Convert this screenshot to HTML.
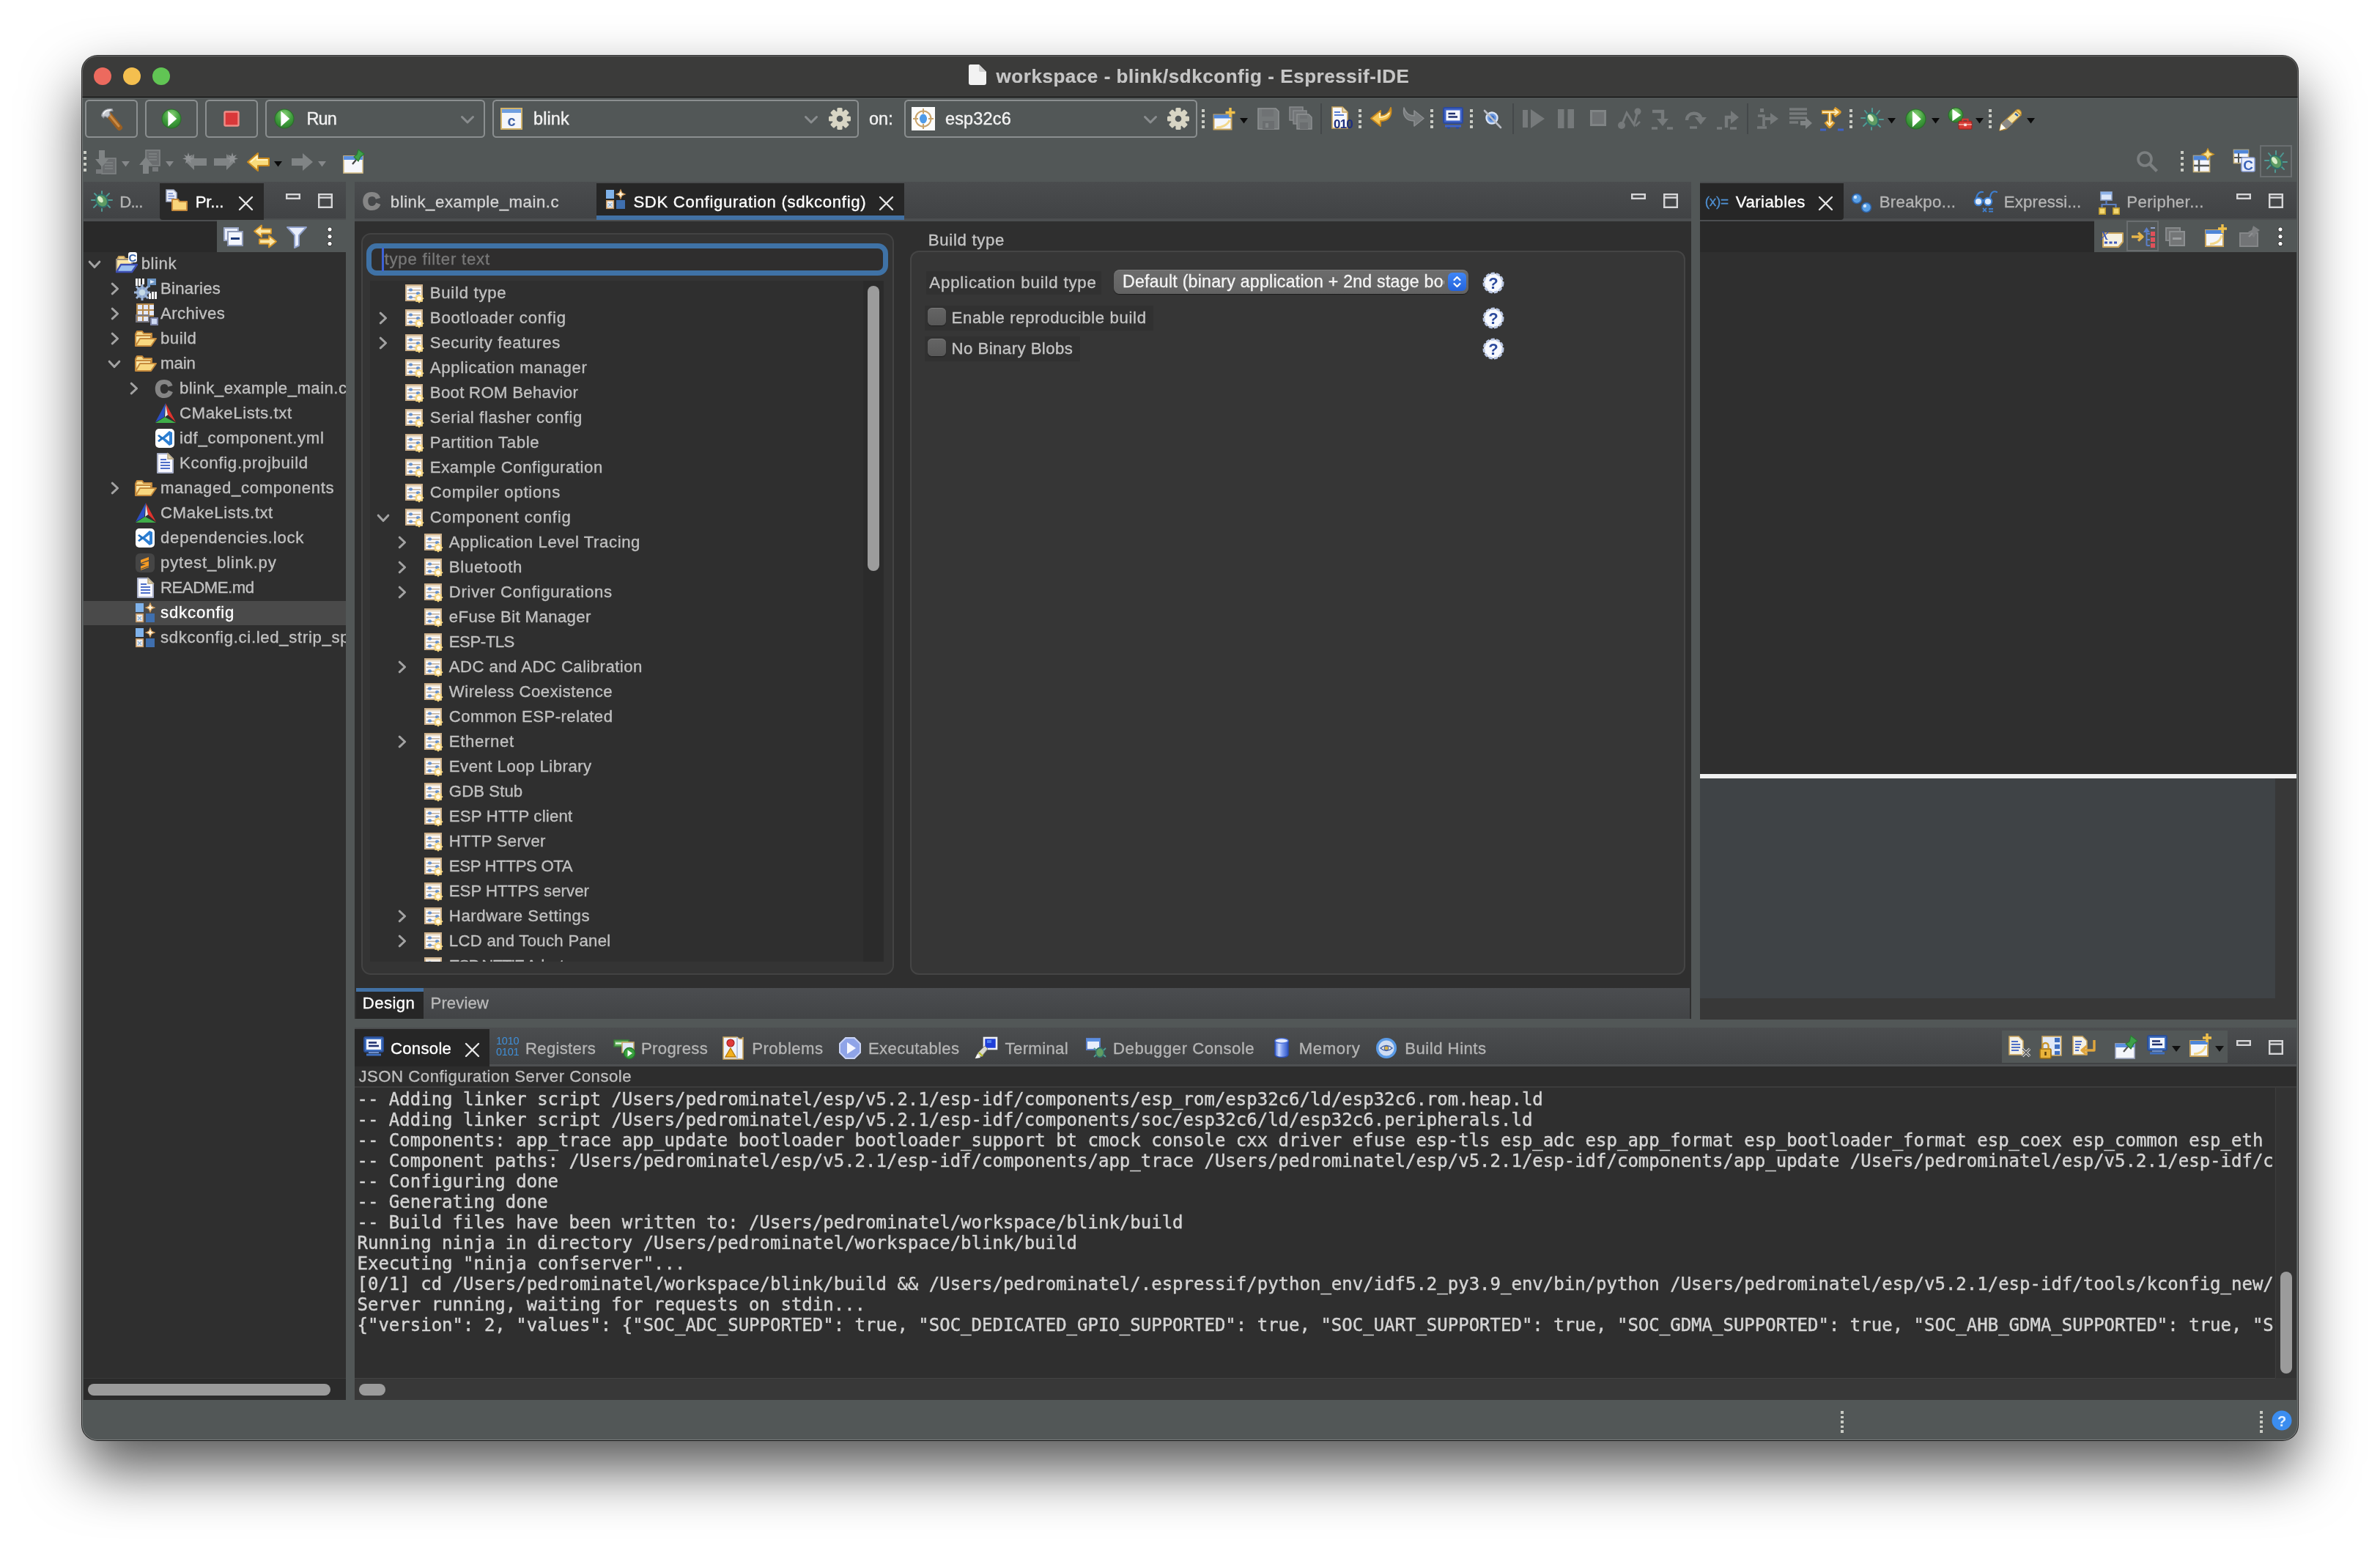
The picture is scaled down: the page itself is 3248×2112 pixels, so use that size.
<!DOCTYPE html>
<html lang="en"><head><meta charset="utf-8"><title>workspace - blink/sdkconfig - Espressif-IDE</title>
<style>
*{box-sizing:border-box;margin:0;padding:0}
html,body{width:3248px;height:2112px;background:#fff;overflow:hidden}
body{position:relative;font-family:"Liberation Sans",sans-serif;font-size:23px;color:#c9c9c9;-webkit-font-smoothing:antialiased}
#win{position:absolute;left:112px;top:76px;width:3024px;height:1889px;border-radius:21px;background:#525757;overflow:hidden;
 box-shadow:0 0 0 1px rgba(0,0,0,.8),0 40px 80px rgba(0,0,0,.66)}
#win:after{content:'';position:absolute;left:0;top:0;right:0;bottom:0;border-radius:21px;box-shadow:inset 0 0 0 1px rgba(255,255,255,.24);pointer-events:none}
#pg{position:absolute;left:-112px;top:-76px;width:3248px;height:2112px;will-change:transform}
.a{position:absolute}
.t{position:absolute;white-space:nowrap;line-height:34px;height:34px}
.mono{font-family:"DejaVu Sans Mono","Liberation Mono",monospace;font-size:24px;line-height:28px;white-space:pre;color:#d4d4d4;-webkit-text-stroke:.45px}
svg{position:absolute;overflow:visible}
.btn{position:absolute;border:2px solid #8b8f90;border-radius:5.5px;background:#525757}
</style></head>
<body>
<div id="win"><div id="pg">
<div class="a" style="left:112px;top:75px;width:3024px;height:57px;background:#3b3b3a;"></div>
<div class="a" style="left:112px;top:131.6px;width:3024px;height:1.4000000000000057px;background:#050505;"></div>
<div class="a" style="left:128px;top:92px;width:24px;height:24px;border-radius:50%;background:#ec6a5e"></div>
<div class="a" style="left:168px;top:92px;width:24px;height:24px;border-radius:50%;background:#f4bf4f"></div>
<div class="a" style="left:208px;top:92px;width:24px;height:24px;border-radius:50%;background:#61c554"></div>
<svg style="left:1322px;top:88px" width="24" height="28" viewBox="0 0 24 28"><path d="M2 0 H14 L24 10 V25 a3 3 0 0 1 -3 3 H3 a3 3 0 0 1 -3 -3 V2 a2 2 0 0 1 2 -2Z" fill="#f2f2f2"/><path d="M14 0 L24 10 H16 a2 2 0 0 1 -2 -2Z" fill="#cfcfcf"/></svg>
<div class="t" style="left:1359.56px;top:87.1px;color:#c6c6c6;font-size:26px;font-weight:bold;letter-spacing:0.547px;-webkit-text-stroke:0.2px;">workspace - blink/sdkconfig - Espressif-IDE</div>
<div class="a" style="left:112px;top:133px;width:3024px;height:116px;background:#525757;"></div>
<div class="a" style="left:114px;top:248px;width:358px;height:1662px;background:#2f2f2f;"></div>
<div class="a" style="left:484px;top:248px;width:1824px;height:1142px;background:#2f2f2f;"></div>
<div class="a" style="left:2320px;top:248px;width:814px;height:1143px;background:#2f2f2f;"></div>
<div class="a" style="left:484px;top:1404px;width:2650px;height:506px;background:#2f2f2f;"></div>
<div class="a" style="left:114px;top:248px;width:358px;height:50px;background:linear-gradient(#4a4c4e,#414345);"></div>
<div class="a" style="left:114px;top:298px;width:358px;height:4px;background:#4c4e50;"></div>
<div class="a" style="left:218px;top:250px;width:142px;height:50px;background:#292929;border-radius:0 0 0 4px;"></div>
<div class="a" style="left:114px;top:302px;width:358px;height:42px;background:#292929;"></div>
<div class="a" style="left:296px;top:300px;width:176px;height:44px;background:#525757;"></div>
<svg style="left:124px;top:258px" width="30" height="30" viewBox="0 0 30 30"><g stroke="#4f9a94" stroke-width="2" stroke-linecap="round"><path d="M15 3V8M5 6L9 10M25 6L21 10M1 15H7M29 15H23M4 25L9 20M26 25L21 20M15 27V30"/></g><ellipse cx="15" cy="16" rx="7.5" ry="9" transform="rotate(-35 15 16)" fill="#5f9c63" stroke="#2f6f6a" stroke-width="2"/><ellipse cx="13" cy="14" rx="3" ry="5" transform="rotate(-35 13 14)" fill="#d9ecc9"/></svg>
<div class="t" style="left:163.2px;top:259.4px;color:#b4b4b4;font-size:22.2px;letter-spacing:-0.777px;-webkit-text-stroke:0.35px;">D...</div>
<svg style="left:226px;top:258px" width="30" height="30" viewBox="0 0 30 30"><path d="M1 1H11L15 5V17H1Z" fill="#e9edf8" stroke="#9da7bf" stroke-width="1.6"/><g stroke="#6f86c9" stroke-width="1.6"><path d="M3.5 6H10M3.5 9.5H12M3.5 13H12"/></g><path d="M9 14H17L19 17H29V29H9Z" fill="#f8d57a" stroke="#c58a3c" stroke-width="2" stroke-linejoin="round"/></svg>
<div class="t" style="left:266.7px;top:259.4px;color:#ffffff;font-size:22.2px;letter-spacing:-0.154px;-webkit-text-stroke:0.35px;">Pr...</div>
<svg style="left:326px;top:268px" width="19" height="19" viewBox="0 0 19 19"><path d="M1 1L18 18M18 1L1 18" stroke="#e8e8e8" stroke-width="2.4" stroke-linecap="round"/></svg>
<svg style="left:390px;top:264px" width="20" height="8" viewBox="0 0 20 8"><rect x="1.2" y="1.2" width="17.6" height="5.6" fill="none" stroke="#d6d6d8" stroke-width="2.4"/></svg>
<svg style="left:434px;top:264px" width="20" height="20" viewBox="0 0 20 20"><rect x="1.2" y="1.2" width="17.6" height="17.6" fill="none" stroke="#d6d6d8" stroke-width="2.4"/><path d="M1 5.6H19" stroke="#d6d6d8" stroke-width="2.4"/></svg>
<svg style="left:305px;top:310px" width="28" height="26" viewBox="0 0 28 26"><rect x="1" y="1" width="19" height="17" fill="#e9eefb" stroke="#9aa6c4" stroke-width="2"/><rect x="6" y="6" width="20" height="19" fill="#f4f7ff" stroke="#8f9bb8" stroke-width="2"/><path d="M10 15.5H22" stroke="#1e3a78" stroke-width="3"/></svg>
<svg style="left:345px;top:306px" width="34" height="34" viewBox="0 0 34 34"><g stroke="#d99a2b" stroke-width="1.8" stroke-linejoin="round" fill="#fbe7a8"><path d="M2 9.5L12 1.5V6.5H25V12.5H12V17.5Z"/><path d="M32 23.5L22 15.5V20.5H9V26.5H22V31.5Z"/></g></svg>
<svg style="left:391px;top:309px" width="28" height="30" viewBox="0 0 28 30"><path d="M1 1H27L17 12V26L11 29V12Z" fill="#e8eefc" stroke="#8fa0c8" stroke-width="2" stroke-linejoin="round"/></svg>
<svg style="left:445px;top:309px" width="10" height="30" viewBox="0 0 10 30"><circle cx="5" cy="4" r="3.2" fill="#fff" stroke="#262626" stroke-width="1"/><circle cx="5" cy="13.8" r="3.2" fill="#fff" stroke="#262626" stroke-width="1"/><circle cx="5" cy="23.6" r="3.2" fill="#fff" stroke="#262626" stroke-width="1"/></svg>
<div class="a" style="left:114px;top:344px;width:358px;height:1536px;overflow:hidden"><div class="a" style="left:-114px;top:-344px;width:3248px;height:2112px">
<svg style="left:121px;top:356.3px" width="16" height="10" viewBox="0 0 16 10"><path d="M1.2 1.2 L8 8.6 L14.8 1.2" fill="none" stroke="#a3a3a3" stroke-width="3" stroke-linecap="round" stroke-linejoin="round"/></svg>
<svg style="left:156px;top:344.3px" width="32" height="30" viewBox="0 0 32 30"><path d="M4 10 L6 6 L13 6 L15 9 L24 9 L24 14 L4 14Z" fill="#f6d98b" stroke="#caa45e" stroke-width="2" stroke-linejoin="round"/><path d="M3 26 L3 10 L24 10 L24 16" fill="#fbe7a6" stroke="#9a8d7a" stroke-width="2"/><path d="M3 27 L9 17 L31 17 L24 27Z" fill="#9cc0ef" stroke="#3d4fb3" stroke-width="2.4" stroke-linejoin="round"/><rect x="19" y="0" width="12" height="14" rx="3" fill="#fff"/><text x="25" y="12.5" font-family="Liberation Sans, sans-serif" font-weight="bold" font-size="15" fill="#3863a8" text-anchor="middle">C</text></svg>
<div class="t" style="left:192.65px;top:343.4px;color:#c0c0c0;font-size:22.2px;letter-spacing:0.586px;-webkit-text-stroke:0.35px;">blink</div>
<svg style="left:152px;top:386.3px" width="10" height="16" viewBox="0 0 10 16"><path d="M1.2 1.2 L8.6 8 L1.2 14.8" fill="none" stroke="#a3a3a3" stroke-width="3" stroke-linecap="round" stroke-linejoin="round"/></svg>
<svg style="left:183px;top:378.3px" width="32" height="32" viewBox="0 0 32 32"><g fill="#f4f4f4"><rect x="2" y="2" width="3" height="10"/><rect x="6" y="2" width="3" height="10"/><rect x="11" y="2" width="3" height="8"/><rect x="24" y="20" width="3" height="10"/><rect x="28" y="20" width="3" height="10"/><rect x="20" y="22" width="3" height="8"/></g><path d="M18 2 L30 2 L30 11 L22 11 L22 14 L18 14Z" fill="#6b93c1"/><path d="M22 4 L28 6.5 L22 9Z" fill="#dfeaf7"/><circle cx="11" cy="21" r="8" fill="#7f9cc6"/><circle cx="11" cy="21" r="4.2" fill="#cfe0ea"/><g stroke="#9db4d6" stroke-width="3"><path d="M11 10V32M0 21H22M3 13L19 29M19 13L3 29"/></g><circle cx="11" cy="21" r="4" fill="#c6dbe6"/></svg>
<div class="t" style="left:219.0px;top:377.4px;color:#c0c0c0;font-size:22.2px;letter-spacing:0.251px;-webkit-text-stroke:0.35px;">Binaries</div>
<svg style="left:152px;top:420.3px" width="10" height="16" viewBox="0 0 10 16"><path d="M1.2 1.2 L8.6 8 L1.2 14.8" fill="none" stroke="#a3a3a3" stroke-width="3" stroke-linecap="round" stroke-linejoin="round"/></svg>
<svg style="left:185px;top:413.3px" width="32" height="32" viewBox="0 0 32 32"><rect x="1" y="1" width="24" height="24" fill="#b5894b"/><rect x="3" y="3" width="6" height="6" fill="#e3e8f8"/><rect x="11" y="3" width="6" height="6" fill="#e3e8f8"/><rect x="19" y="3" width="6" height="6" fill="#e3e8f8"/><rect x="3" y="11" width="6" height="6" fill="#e3e8f8"/><rect x="11" y="11" width="6" height="6" fill="#e3e8f8"/><rect x="19" y="11" width="6" height="6" fill="#e3e8f8"/><rect x="3" y="19" width="6" height="6" fill="#e3e8f8"/><rect x="11" y="19" width="6" height="6" fill="#e3e8f8"/><rect x="1" y="17" width="17" height="9" fill="none" stroke="#7a7a85" stroke-width="2"/><rect x="19" y="19" width="8" height="8" fill="#2f2f2f"/><rect x="21" y="21" width="9" height="9" fill="#cdd9f3" stroke="#7f86a8" stroke-width="2"/></svg>
<div class="t" style="left:219.0px;top:411.4px;color:#c0c0c0;font-size:22.2px;letter-spacing:0.411px;-webkit-text-stroke:0.35px;">Archives</div>
<svg style="left:152px;top:454.3px" width="10" height="16" viewBox="0 0 10 16"><path d="M1.2 1.2 L8.6 8 L1.2 14.8" fill="none" stroke="#a3a3a3" stroke-width="3" stroke-linecap="round" stroke-linejoin="round"/></svg>
<svg style="left:183px;top:450.3px" width="32" height="24" viewBox="0 0 32 24"><path d="M2 6 L4 2 L11 2 L13 5 L24 5 L24 10 L2 10Z" fill="#f6d98b" stroke="#c58a3c" stroke-width="2" stroke-linejoin="round"/><path d="M2 22 L2 8 L23 8 L23 12" fill="#fbe7a6" stroke="#c58a3c" stroke-width="2" stroke-linejoin="round"/><path d="M2 22 L8 12 L30 12 L23 22Z" fill="#f8d880" stroke="#c58a3c" stroke-width="2" stroke-linejoin="round"/></svg>
<div class="t" style="left:219.0px;top:445.4px;color:#c0c0c0;font-size:22.2px;letter-spacing:0.514px;-webkit-text-stroke:0.35px;">build</div>
<svg style="left:148px;top:492.3px" width="16" height="10" viewBox="0 0 16 10"><path d="M1.2 1.2 L8 8.6 L14.8 1.2" fill="none" stroke="#a3a3a3" stroke-width="3" stroke-linecap="round" stroke-linejoin="round"/></svg>
<svg style="left:183px;top:484.3px" width="32" height="24" viewBox="0 0 32 24"><path d="M2 6 L4 2 L11 2 L13 5 L24 5 L24 10 L2 10Z" fill="#f6d98b" stroke="#c58a3c" stroke-width="2" stroke-linejoin="round"/><path d="M2 22 L2 8 L23 8 L23 12" fill="#fbe7a6" stroke="#c58a3c" stroke-width="2" stroke-linejoin="round"/><path d="M2 22 L8 12 L30 12 L23 22Z" fill="#f8d880" stroke="#c58a3c" stroke-width="2" stroke-linejoin="round"/></svg>
<div class="t" style="left:219.0px;top:479.4px;color:#c0c0c0;font-size:22.2px;letter-spacing:-0.058px;-webkit-text-stroke:0.35px;">main</div>
<svg style="left:178px;top:522.3px" width="10" height="16" viewBox="0 0 10 16"><path d="M1.2 1.2 L8.6 8 L1.2 14.8" fill="none" stroke="#a3a3a3" stroke-width="3" stroke-linecap="round" stroke-linejoin="round"/></svg>
<div class="t" style="left:211.5px;top:513.8px;font-weight:bold;font-size:33px;color:#858585;letter-spacing:0;-webkit-text-stroke:2.2px #858585">C</div>
<div class="t" style="left:245.0px;top:513.4px;color:#c0c0c0;font-size:22.2px;letter-spacing:0.447px;-webkit-text-stroke:0.35px;">blink_example_main.c</div>
<svg style="left:212px;top:550.3px" width="28" height="28" viewBox="0 0 28 28"><path d="M14 0 L0 26 L12 19Z" fill="#2a4fc4"/><path d="M14 0 L28 26 L17 16Z" fill="#e0322c"/><path d="M0 27 L13 19 L28 27Z" fill="#3fae49"/><path d="M14 2 L13 19 L17 16Z" fill="#e8e8e8"/></svg>
<div class="t" style="left:245.0px;top:547.4px;color:#c0c0c0;font-size:22.2px;letter-spacing:0.59px;-webkit-text-stroke:0.35px;">CMakeLists.txt</div>
<svg style="left:212px;top:585.3px" width="26" height="26" viewBox="0 0 26 26"><rect x="0" y="0" width="26" height="26" rx="5" fill="#fff"/><path d="M19 3 L23 5 L23 21 L19 23 L8 13Z" fill="#2d7fd3"/><path d="M19 8.5 L19 17.5 L13 13Z" fill="#fff"/><path d="M3 9.5 L5 8 L12 13 L5 18 L3 16.5 L7 13Z" fill="#1f6fc0"/></svg>
<div class="t" style="left:245.0px;top:581.4px;color:#c0c0c0;font-size:22.2px;letter-spacing:0.665px;-webkit-text-stroke:0.35px;">idf_component.yml</div>
<svg style="left:214px;top:618.3px" width="24" height="28" viewBox="0 0 24 28"><path d="M1 1 L15 1 L22 8 L22 27 L1 27Z" fill="#f8f8ff" stroke="#a9b0c9" stroke-width="2" stroke-linejoin="round"/><path d="M15 1 L15 8 L22 8Z" fill="#e3d2a8" stroke="#b7a783" stroke-width="1.5"/><g stroke="#4f6fc7" stroke-width="2"><path d="M5 9H13M5 13H18M5 17H18M5 21H18"/></g></svg>
<div class="t" style="left:245.0px;top:615.4px;color:#c0c0c0;font-size:22.2px;letter-spacing:0.696px;-webkit-text-stroke:0.35px;">Kconfig.projbuild</div>
<svg style="left:152px;top:658.3px" width="10" height="16" viewBox="0 0 10 16"><path d="M1.2 1.2 L8.6 8 L1.2 14.8" fill="none" stroke="#a3a3a3" stroke-width="3" stroke-linecap="round" stroke-linejoin="round"/></svg>
<svg style="left:183px;top:654.3px" width="32" height="24" viewBox="0 0 32 24"><path d="M2 6 L4 2 L11 2 L13 5 L24 5 L24 10 L2 10Z" fill="#f6d98b" stroke="#c58a3c" stroke-width="2" stroke-linejoin="round"/><path d="M2 22 L2 8 L23 8 L23 12" fill="#fbe7a6" stroke="#c58a3c" stroke-width="2" stroke-linejoin="round"/><path d="M2 22 L8 12 L30 12 L23 22Z" fill="#f8d880" stroke="#c58a3c" stroke-width="2" stroke-linejoin="round"/></svg>
<div class="t" style="left:219.0px;top:649.4px;color:#c0c0c0;font-size:22.2px;letter-spacing:0.637px;-webkit-text-stroke:0.35px;">managed_components</div>
<svg style="left:185px;top:686.3px" width="28" height="28" viewBox="0 0 28 28"><path d="M14 0 L0 26 L12 19Z" fill="#2a4fc4"/><path d="M14 0 L28 26 L17 16Z" fill="#e0322c"/><path d="M0 27 L13 19 L28 27Z" fill="#3fae49"/><path d="M14 2 L13 19 L17 16Z" fill="#e8e8e8"/></svg>
<div class="t" style="left:219.0px;top:683.4px;color:#c0c0c0;font-size:22.2px;letter-spacing:0.598px;-webkit-text-stroke:0.35px;">CMakeLists.txt</div>
<svg style="left:185px;top:721.3px" width="26" height="26" viewBox="0 0 26 26"><rect x="0" y="0" width="26" height="26" rx="5" fill="#fff"/><path d="M19 3 L23 5 L23 21 L19 23 L8 13Z" fill="#2d7fd3"/><path d="M19 8.5 L19 17.5 L13 13Z" fill="#fff"/><path d="M3 9.5 L5 8 L12 13 L5 18 L3 16.5 L7 13Z" fill="#1f6fc0"/></svg>
<div class="t" style="left:219.0px;top:717.4px;color:#c0c0c0;font-size:22.2px;letter-spacing:0.723px;-webkit-text-stroke:0.35px;">dependencies.lock</div>
<svg style="left:185px;top:755.3px" width="26" height="26" viewBox="0 0 26 26"><rect x="0" y="0" width="26" height="26" rx="6" fill="#454545"/><path d="M18 5 L7 9 L7 13 L18 9Z M7 14 L18 10.5 L18 17 L7 21 L7 17.5 L14 15Z M18 18 L7 22 L7 23 L18 19Z" fill="#f59a23"/></svg>
<div class="t" style="left:219.0px;top:751.4px;color:#c0c0c0;font-size:22.2px;letter-spacing:0.79px;-webkit-text-stroke:0.35px;">pytest_blink.py</div>
<svg style="left:187px;top:788.3px" width="24" height="28" viewBox="0 0 24 28"><path d="M1 1 L15 1 L22 8 L22 27 L1 27Z" fill="#f8f8ff" stroke="#a9b0c9" stroke-width="2" stroke-linejoin="round"/><path d="M15 1 L15 8 L22 8Z" fill="#e3d2a8" stroke="#b7a783" stroke-width="1.5"/><g stroke="#4f6fc7" stroke-width="2"><path d="M5 9H13M5 13H18M5 17H18M5 21H18"/></g></svg>
<div class="t" style="left:219.0px;top:785.4px;color:#c0c0c0;font-size:22.2px;letter-spacing:-0.474px;-webkit-text-stroke:0.35px;">README.md</div>
<div class="a" style="left:114px;top:819.5px;width:358px;height:33.0px;background:#4a4a4a;"></div>
<svg style="left:185px;top:823.3px" width="26" height="26" viewBox="0 0 26 26"><rect x="0" y="0" width="11" height="12" fill="#7fb2ea"/><rect x="0.8" y="14.8" width="9.5" height="10.5" fill="#f1f1f1" stroke="#c89b67" stroke-width="1.6"/><path d="M3 18L8 23M8 18L3 23" stroke="#8fb4dc" stroke-width="1.4"/><rect x="14" y="14" width="12" height="12" fill="#3f6fae"/><path d="M20 0 L21.8 4.2 L26 6 L21.8 7.8 L20 12 L18.2 7.8 L14 6 L18.2 4.2Z" fill="#fff5dd" stroke="#d39a55" stroke-width="1.2"/></svg>
<div class="t" style="left:219.0px;top:819.4px;color:#ffffff;font-size:22.2px;letter-spacing:0.84px;-webkit-text-stroke:0.35px;">sdkconfig</div>
<svg style="left:185px;top:857.3px" width="26" height="26" viewBox="0 0 26 26"><rect x="0" y="0" width="11" height="12" fill="#7fb2ea"/><rect x="0.8" y="14.8" width="9.5" height="10.5" fill="#f1f1f1" stroke="#c89b67" stroke-width="1.6"/><path d="M3 18L8 23M8 18L3 23" stroke="#8fb4dc" stroke-width="1.4"/><rect x="14" y="14" width="12" height="12" fill="#3f6fae"/><path d="M20 0 L21.8 4.2 L26 6 L21.8 7.8 L20 12 L18.2 7.8 L14 6 L18.2 4.2Z" fill="#fff5dd" stroke="#d39a55" stroke-width="1.2"/></svg>
<div class="t" style="left:219.0px;top:853.4px;color:#c0c0c0;font-size:22.2px;letter-spacing:0.663px;-webkit-text-stroke:0.35px;">sdkconfig.ci.led_strip_spi</div>
</div></div>
<div class="a" style="left:114px;top:1880px;width:358px;height:30px;background:#2b2b2b;"></div>
<div class="a" style="left:114px;top:1880px;width:358px;height:1px;background:#3a3a3a;"></div>
<div class="a" style="left:120px;top:1888px;width:331px;height:16px;border-radius:8px;background:#9b9b9b"></div>
<div class="a" style="left:484px;top:248px;width:1824px;height:50px;background:linear-gradient(#4a4c4e,#414345);"></div>
<div class="a" style="left:484px;top:298px;width:1824px;height:4px;background:#4c4e50;"></div>
<div class="t" style="left:495px;top:257.5px;font-weight:bold;font-size:33px;color:#868686;letter-spacing:0;-webkit-text-stroke:2.2px #868686">C</div>
<div class="t" style="left:532.8px;top:259.4px;color:#d4d4d4;font-size:22.2px;letter-spacing:0.539px;-webkit-text-stroke:0.35px;">blink_example_main.c</div>
<div class="a" style="left:814px;top:250px;width:420px;height:50px;background:#262626;"></div>
<div class="a" style="left:814px;top:294px;width:420px;height:6px;background:#4271a4;"></div>
<svg style="left:827px;top:259px" width="26" height="26" viewBox="0 0 26 26"><rect x="0" y="0" width="11" height="12" fill="#7fb2ea"/><rect x="0.8" y="14.8" width="9.5" height="10.5" fill="#f1f1f1" stroke="#c89b67" stroke-width="1.6"/><path d="M3 18L8 23M8 18L3 23" stroke="#8fb4dc" stroke-width="1.4"/><rect x="14" y="14" width="12" height="12" fill="#3f6fae"/><path d="M20 0 L21.8 4.2 L26 6 L21.8 7.8 L20 12 L18.2 7.8 L14 6 L18.2 4.2Z" fill="#fff5dd" stroke="#d39a55" stroke-width="1.2"/></svg>
<div class="t" style="left:864.4px;top:259.4px;color:#ffffff;font-size:22.2px;letter-spacing:0.672px;-webkit-text-stroke:0.35px;">SDK Configuration (sdkconfig)</div>
<svg style="left:1200px;top:268px" width="19" height="19" viewBox="0 0 19 19"><path d="M1 1L18 18M18 1L1 18" stroke="#e8e8e8" stroke-width="2.4" stroke-linecap="round"/></svg>
<svg style="left:2226px;top:264px" width="20" height="8" viewBox="0 0 20 8"><rect x="1.2" y="1.2" width="17.6" height="5.6" fill="none" stroke="#d6d6d8" stroke-width="2.4"/></svg>
<svg style="left:2270px;top:264px" width="20" height="20" viewBox="0 0 20 20"><rect x="1.2" y="1.2" width="17.6" height="17.6" fill="none" stroke="#d6d6d8" stroke-width="2.4"/><path d="M1 5.6H19" stroke="#d6d6d8" stroke-width="2.4"/></svg>
<div class="a" style="left:486px;top:302px;width:1820px;height:1046px;background:#2f2f2f;"></div>
<div class="a" style="left:493px;top:318px;width:727px;height:1012px;border:2px solid #434343;border-radius:13px;background:#343434"></div>
<div class="a" style="left:500px;top:332px;width:712px;height:44px;border:7px solid #3f72a6;border-radius:14px;background:#2f2e2e"></div>
<div class="a" style="left:521px;top:338px;width:3px;height:32px;background:#3d62d8;"></div>
<div class="t" style="left:524.5px;top:337.4px;color:#777777;font-size:22.2px;letter-spacing:0.781px;-webkit-text-stroke:0.35px;">type filter text</div>
<div class="a" style="left:505px;top:383px;width:701px;height:929px;background:#2f2f2f;"></div>
<div class="a" style="left:1178px;top:383px;width:28px;height:929px;background:#2b2b2b;"></div>
<div class="a" style="left:1184px;top:390px;width:16px;height:389px;border-radius:8px;background:#9c9c9c"></div>
<div class="a" style="left:505px;top:383px;width:673px;height:929px;overflow:hidden"><div class="a" style="left:-505px;top:-383px;width:3248px;height:2112px">
<svg style="left:552.5px;top:388.3px" width="26" height="28" viewBox="0 0 26 28"><rect x="1" y="1" width="22" height="21" fill="#fbfbfd" stroke="#cdb08a" stroke-width="2"/><rect x="2" y="2" width="20" height="2.5" fill="#eadcc6"/><rect x="3" y="7" width="18" height="1.6" fill="#c4b29c"/><rect x="5" y="5.5" width="5" height="4" rx="1.8" fill="#6590cc"/><rect x="3" y="11.6" width="18" height="1.6" fill="#c4b29c"/><rect x="15" y="10.2" width="5" height="4" rx="1.8" fill="#6590cc"/><rect x="3" y="17" width="12" height="1.6" fill="#c4b29c"/><rect x="5" y="15.5" width="5" height="4" rx="1.8" fill="#6590cc"/><path d="M19.0 12.6L20.9 14.7L23.7 14.5L23.5 17.3L25.6 19.2L23.5 21.1L23.7 23.9L20.9 23.7L19.0 25.8L17.1 23.7L14.3 23.9L14.5 21.1L12.4 19.2L14.5 17.3L14.3 14.5L17.1 14.7Z" fill="#f6d682"/><circle cx="19" cy="19.2" r="2.9" fill="#fffaea"/></svg>
<div class="t" style="left:586.8px;top:383.4px;color:#c0c0c0;font-size:22.2px;letter-spacing:0.716px;-webkit-text-stroke:0.35px;">Build type</div>
<svg style="left:518px;top:426.3px" width="10" height="16" viewBox="0 0 10 16"><path d="M1.2 1.2 L8.6 8 L1.2 14.8" fill="none" stroke="#a3a3a3" stroke-width="3" stroke-linecap="round" stroke-linejoin="round"/></svg>
<svg style="left:552.5px;top:422.3px" width="26" height="28" viewBox="0 0 26 28"><rect x="1" y="1" width="22" height="21" fill="#fbfbfd" stroke="#cdb08a" stroke-width="2"/><rect x="2" y="2" width="20" height="2.5" fill="#eadcc6"/><rect x="3" y="7" width="18" height="1.6" fill="#c4b29c"/><rect x="5" y="5.5" width="5" height="4" rx="1.8" fill="#6590cc"/><rect x="3" y="11.6" width="18" height="1.6" fill="#c4b29c"/><rect x="15" y="10.2" width="5" height="4" rx="1.8" fill="#6590cc"/><rect x="3" y="17" width="12" height="1.6" fill="#c4b29c"/><rect x="5" y="15.5" width="5" height="4" rx="1.8" fill="#6590cc"/><path d="M19.0 12.6L20.9 14.7L23.7 14.5L23.5 17.3L25.6 19.2L23.5 21.1L23.7 23.9L20.9 23.7L19.0 25.8L17.1 23.7L14.3 23.9L14.5 21.1L12.4 19.2L14.5 17.3L14.3 14.5L17.1 14.7Z" fill="#f6d682"/><circle cx="19" cy="19.2" r="2.9" fill="#fffaea"/></svg>
<div class="t" style="left:586.8px;top:417.4px;color:#c0c0c0;font-size:22.2px;letter-spacing:0.78px;-webkit-text-stroke:0.35px;">Bootloader config</div>
<svg style="left:518px;top:460.3px" width="10" height="16" viewBox="0 0 10 16"><path d="M1.2 1.2 L8.6 8 L1.2 14.8" fill="none" stroke="#a3a3a3" stroke-width="3" stroke-linecap="round" stroke-linejoin="round"/></svg>
<svg style="left:552.5px;top:456.3px" width="26" height="28" viewBox="0 0 26 28"><rect x="1" y="1" width="22" height="21" fill="#fbfbfd" stroke="#cdb08a" stroke-width="2"/><rect x="2" y="2" width="20" height="2.5" fill="#eadcc6"/><rect x="3" y="7" width="18" height="1.6" fill="#c4b29c"/><rect x="5" y="5.5" width="5" height="4" rx="1.8" fill="#6590cc"/><rect x="3" y="11.6" width="18" height="1.6" fill="#c4b29c"/><rect x="15" y="10.2" width="5" height="4" rx="1.8" fill="#6590cc"/><rect x="3" y="17" width="12" height="1.6" fill="#c4b29c"/><rect x="5" y="15.5" width="5" height="4" rx="1.8" fill="#6590cc"/><path d="M19.0 12.6L20.9 14.7L23.7 14.5L23.5 17.3L25.6 19.2L23.5 21.1L23.7 23.9L20.9 23.7L19.0 25.8L17.1 23.7L14.3 23.9L14.5 21.1L12.4 19.2L14.5 17.3L14.3 14.5L17.1 14.7Z" fill="#f6d682"/><circle cx="19" cy="19.2" r="2.9" fill="#fffaea"/></svg>
<div class="t" style="left:586.8px;top:451.4px;color:#c0c0c0;font-size:22.2px;letter-spacing:0.688px;-webkit-text-stroke:0.35px;">Security features</div>
<svg style="left:552.5px;top:490.3px" width="26" height="28" viewBox="0 0 26 28"><rect x="1" y="1" width="22" height="21" fill="#fbfbfd" stroke="#cdb08a" stroke-width="2"/><rect x="2" y="2" width="20" height="2.5" fill="#eadcc6"/><rect x="3" y="7" width="18" height="1.6" fill="#c4b29c"/><rect x="5" y="5.5" width="5" height="4" rx="1.8" fill="#6590cc"/><rect x="3" y="11.6" width="18" height="1.6" fill="#c4b29c"/><rect x="15" y="10.2" width="5" height="4" rx="1.8" fill="#6590cc"/><rect x="3" y="17" width="12" height="1.6" fill="#c4b29c"/><rect x="5" y="15.5" width="5" height="4" rx="1.8" fill="#6590cc"/><path d="M19.0 12.6L20.9 14.7L23.7 14.5L23.5 17.3L25.6 19.2L23.5 21.1L23.7 23.9L20.9 23.7L19.0 25.8L17.1 23.7L14.3 23.9L14.5 21.1L12.4 19.2L14.5 17.3L14.3 14.5L17.1 14.7Z" fill="#f6d682"/><circle cx="19" cy="19.2" r="2.9" fill="#fffaea"/></svg>
<div class="t" style="left:586.8px;top:485.4px;color:#c0c0c0;font-size:22.2px;letter-spacing:0.652px;-webkit-text-stroke:0.35px;">Application manager</div>
<svg style="left:552.5px;top:524.3px" width="26" height="28" viewBox="0 0 26 28"><rect x="1" y="1" width="22" height="21" fill="#fbfbfd" stroke="#cdb08a" stroke-width="2"/><rect x="2" y="2" width="20" height="2.5" fill="#eadcc6"/><rect x="3" y="7" width="18" height="1.6" fill="#c4b29c"/><rect x="5" y="5.5" width="5" height="4" rx="1.8" fill="#6590cc"/><rect x="3" y="11.6" width="18" height="1.6" fill="#c4b29c"/><rect x="15" y="10.2" width="5" height="4" rx="1.8" fill="#6590cc"/><rect x="3" y="17" width="12" height="1.6" fill="#c4b29c"/><rect x="5" y="15.5" width="5" height="4" rx="1.8" fill="#6590cc"/><path d="M19.0 12.6L20.9 14.7L23.7 14.5L23.5 17.3L25.6 19.2L23.5 21.1L23.7 23.9L20.9 23.7L19.0 25.8L17.1 23.7L14.3 23.9L14.5 21.1L12.4 19.2L14.5 17.3L14.3 14.5L17.1 14.7Z" fill="#f6d682"/><circle cx="19" cy="19.2" r="2.9" fill="#fffaea"/></svg>
<div class="t" style="left:586.8px;top:519.4px;color:#c0c0c0;font-size:22.2px;letter-spacing:0.296px;-webkit-text-stroke:0.35px;">Boot ROM Behavior</div>
<svg style="left:552.5px;top:558.3px" width="26" height="28" viewBox="0 0 26 28"><rect x="1" y="1" width="22" height="21" fill="#fbfbfd" stroke="#cdb08a" stroke-width="2"/><rect x="2" y="2" width="20" height="2.5" fill="#eadcc6"/><rect x="3" y="7" width="18" height="1.6" fill="#c4b29c"/><rect x="5" y="5.5" width="5" height="4" rx="1.8" fill="#6590cc"/><rect x="3" y="11.6" width="18" height="1.6" fill="#c4b29c"/><rect x="15" y="10.2" width="5" height="4" rx="1.8" fill="#6590cc"/><rect x="3" y="17" width="12" height="1.6" fill="#c4b29c"/><rect x="5" y="15.5" width="5" height="4" rx="1.8" fill="#6590cc"/><path d="M19.0 12.6L20.9 14.7L23.7 14.5L23.5 17.3L25.6 19.2L23.5 21.1L23.7 23.9L20.9 23.7L19.0 25.8L17.1 23.7L14.3 23.9L14.5 21.1L12.4 19.2L14.5 17.3L14.3 14.5L17.1 14.7Z" fill="#f6d682"/><circle cx="19" cy="19.2" r="2.9" fill="#fffaea"/></svg>
<div class="t" style="left:586.8px;top:553.4px;color:#c0c0c0;font-size:22.2px;letter-spacing:0.634px;-webkit-text-stroke:0.35px;">Serial flasher config</div>
<svg style="left:552.5px;top:592.3px" width="26" height="28" viewBox="0 0 26 28"><rect x="1" y="1" width="22" height="21" fill="#fbfbfd" stroke="#cdb08a" stroke-width="2"/><rect x="2" y="2" width="20" height="2.5" fill="#eadcc6"/><rect x="3" y="7" width="18" height="1.6" fill="#c4b29c"/><rect x="5" y="5.5" width="5" height="4" rx="1.8" fill="#6590cc"/><rect x="3" y="11.6" width="18" height="1.6" fill="#c4b29c"/><rect x="15" y="10.2" width="5" height="4" rx="1.8" fill="#6590cc"/><rect x="3" y="17" width="12" height="1.6" fill="#c4b29c"/><rect x="5" y="15.5" width="5" height="4" rx="1.8" fill="#6590cc"/><path d="M19.0 12.6L20.9 14.7L23.7 14.5L23.5 17.3L25.6 19.2L23.5 21.1L23.7 23.9L20.9 23.7L19.0 25.8L17.1 23.7L14.3 23.9L14.5 21.1L12.4 19.2L14.5 17.3L14.3 14.5L17.1 14.7Z" fill="#f6d682"/><circle cx="19" cy="19.2" r="2.9" fill="#fffaea"/></svg>
<div class="t" style="left:586.8px;top:587.4px;color:#c0c0c0;font-size:22.2px;letter-spacing:0.614px;-webkit-text-stroke:0.35px;">Partition Table</div>
<svg style="left:552.5px;top:626.3px" width="26" height="28" viewBox="0 0 26 28"><rect x="1" y="1" width="22" height="21" fill="#fbfbfd" stroke="#cdb08a" stroke-width="2"/><rect x="2" y="2" width="20" height="2.5" fill="#eadcc6"/><rect x="3" y="7" width="18" height="1.6" fill="#c4b29c"/><rect x="5" y="5.5" width="5" height="4" rx="1.8" fill="#6590cc"/><rect x="3" y="11.6" width="18" height="1.6" fill="#c4b29c"/><rect x="15" y="10.2" width="5" height="4" rx="1.8" fill="#6590cc"/><rect x="3" y="17" width="12" height="1.6" fill="#c4b29c"/><rect x="5" y="15.5" width="5" height="4" rx="1.8" fill="#6590cc"/><path d="M19.0 12.6L20.9 14.7L23.7 14.5L23.5 17.3L25.6 19.2L23.5 21.1L23.7 23.9L20.9 23.7L19.0 25.8L17.1 23.7L14.3 23.9L14.5 21.1L12.4 19.2L14.5 17.3L14.3 14.5L17.1 14.7Z" fill="#f6d682"/><circle cx="19" cy="19.2" r="2.9" fill="#fffaea"/></svg>
<div class="t" style="left:586.8px;top:621.4px;color:#c0c0c0;font-size:22.2px;letter-spacing:0.552px;-webkit-text-stroke:0.35px;">Example Configuration</div>
<svg style="left:552.5px;top:660.3px" width="26" height="28" viewBox="0 0 26 28"><rect x="1" y="1" width="22" height="21" fill="#fbfbfd" stroke="#cdb08a" stroke-width="2"/><rect x="2" y="2" width="20" height="2.5" fill="#eadcc6"/><rect x="3" y="7" width="18" height="1.6" fill="#c4b29c"/><rect x="5" y="5.5" width="5" height="4" rx="1.8" fill="#6590cc"/><rect x="3" y="11.6" width="18" height="1.6" fill="#c4b29c"/><rect x="15" y="10.2" width="5" height="4" rx="1.8" fill="#6590cc"/><rect x="3" y="17" width="12" height="1.6" fill="#c4b29c"/><rect x="5" y="15.5" width="5" height="4" rx="1.8" fill="#6590cc"/><path d="M19.0 12.6L20.9 14.7L23.7 14.5L23.5 17.3L25.6 19.2L23.5 21.1L23.7 23.9L20.9 23.7L19.0 25.8L17.1 23.7L14.3 23.9L14.5 21.1L12.4 19.2L14.5 17.3L14.3 14.5L17.1 14.7Z" fill="#f6d682"/><circle cx="19" cy="19.2" r="2.9" fill="#fffaea"/></svg>
<div class="t" style="left:586.8px;top:655.4px;color:#c0c0c0;font-size:22.2px;letter-spacing:0.733px;-webkit-text-stroke:0.35px;">Compiler options</div>
<svg style="left:515px;top:702.3px" width="16" height="10" viewBox="0 0 16 10"><path d="M1.2 1.2 L8 8.6 L14.8 1.2" fill="none" stroke="#a3a3a3" stroke-width="3" stroke-linecap="round" stroke-linejoin="round"/></svg>
<svg style="left:552.5px;top:694.3px" width="26" height="28" viewBox="0 0 26 28"><rect x="1" y="1" width="22" height="21" fill="#fbfbfd" stroke="#cdb08a" stroke-width="2"/><rect x="2" y="2" width="20" height="2.5" fill="#eadcc6"/><rect x="3" y="7" width="18" height="1.6" fill="#c4b29c"/><rect x="5" y="5.5" width="5" height="4" rx="1.8" fill="#6590cc"/><rect x="3" y="11.6" width="18" height="1.6" fill="#c4b29c"/><rect x="15" y="10.2" width="5" height="4" rx="1.8" fill="#6590cc"/><rect x="3" y="17" width="12" height="1.6" fill="#c4b29c"/><rect x="5" y="15.5" width="5" height="4" rx="1.8" fill="#6590cc"/><path d="M19.0 12.6L20.9 14.7L23.7 14.5L23.5 17.3L25.6 19.2L23.5 21.1L23.7 23.9L20.9 23.7L19.0 25.8L17.1 23.7L14.3 23.9L14.5 21.1L12.4 19.2L14.5 17.3L14.3 14.5L17.1 14.7Z" fill="#f6d682"/><circle cx="19" cy="19.2" r="2.9" fill="#fffaea"/></svg>
<div class="t" style="left:586.8px;top:689.4px;color:#c0c0c0;font-size:22.2px;letter-spacing:0.796px;-webkit-text-stroke:0.35px;">Component config</div>
<svg style="left:544px;top:732.3px" width="10" height="16" viewBox="0 0 10 16"><path d="M1.2 1.2 L8.6 8 L1.2 14.8" fill="none" stroke="#a3a3a3" stroke-width="3" stroke-linecap="round" stroke-linejoin="round"/></svg>
<svg style="left:578.5px;top:728.3px" width="26" height="28" viewBox="0 0 26 28"><rect x="1" y="1" width="22" height="21" fill="#fbfbfd" stroke="#cdb08a" stroke-width="2"/><rect x="2" y="2" width="20" height="2.5" fill="#eadcc6"/><rect x="3" y="7" width="18" height="1.6" fill="#c4b29c"/><rect x="5" y="5.5" width="5" height="4" rx="1.8" fill="#6590cc"/><rect x="3" y="11.6" width="18" height="1.6" fill="#c4b29c"/><rect x="15" y="10.2" width="5" height="4" rx="1.8" fill="#6590cc"/><rect x="3" y="17" width="12" height="1.6" fill="#c4b29c"/><rect x="5" y="15.5" width="5" height="4" rx="1.8" fill="#6590cc"/><path d="M19.0 12.6L20.9 14.7L23.7 14.5L23.5 17.3L25.6 19.2L23.5 21.1L23.7 23.9L20.9 23.7L19.0 25.8L17.1 23.7L14.3 23.9L14.5 21.1L12.4 19.2L14.5 17.3L14.3 14.5L17.1 14.7Z" fill="#f6d682"/><circle cx="19" cy="19.2" r="2.9" fill="#fffaea"/></svg>
<div class="t" style="left:612.8px;top:723.4px;color:#c0c0c0;font-size:22.2px;letter-spacing:0.581px;-webkit-text-stroke:0.35px;">Application Level Tracing</div>
<svg style="left:544px;top:766.3px" width="10" height="16" viewBox="0 0 10 16"><path d="M1.2 1.2 L8.6 8 L1.2 14.8" fill="none" stroke="#a3a3a3" stroke-width="3" stroke-linecap="round" stroke-linejoin="round"/></svg>
<svg style="left:578.5px;top:762.3px" width="26" height="28" viewBox="0 0 26 28"><rect x="1" y="1" width="22" height="21" fill="#fbfbfd" stroke="#cdb08a" stroke-width="2"/><rect x="2" y="2" width="20" height="2.5" fill="#eadcc6"/><rect x="3" y="7" width="18" height="1.6" fill="#c4b29c"/><rect x="5" y="5.5" width="5" height="4" rx="1.8" fill="#6590cc"/><rect x="3" y="11.6" width="18" height="1.6" fill="#c4b29c"/><rect x="15" y="10.2" width="5" height="4" rx="1.8" fill="#6590cc"/><rect x="3" y="17" width="12" height="1.6" fill="#c4b29c"/><rect x="5" y="15.5" width="5" height="4" rx="1.8" fill="#6590cc"/><path d="M19.0 12.6L20.9 14.7L23.7 14.5L23.5 17.3L25.6 19.2L23.5 21.1L23.7 23.9L20.9 23.7L19.0 25.8L17.1 23.7L14.3 23.9L14.5 21.1L12.4 19.2L14.5 17.3L14.3 14.5L17.1 14.7Z" fill="#f6d682"/><circle cx="19" cy="19.2" r="2.9" fill="#fffaea"/></svg>
<div class="t" style="left:612.8px;top:757.4px;color:#c0c0c0;font-size:22.2px;letter-spacing:0.737px;-webkit-text-stroke:0.35px;">Bluetooth</div>
<svg style="left:544px;top:800.3px" width="10" height="16" viewBox="0 0 10 16"><path d="M1.2 1.2 L8.6 8 L1.2 14.8" fill="none" stroke="#a3a3a3" stroke-width="3" stroke-linecap="round" stroke-linejoin="round"/></svg>
<svg style="left:578.5px;top:796.3px" width="26" height="28" viewBox="0 0 26 28"><rect x="1" y="1" width="22" height="21" fill="#fbfbfd" stroke="#cdb08a" stroke-width="2"/><rect x="2" y="2" width="20" height="2.5" fill="#eadcc6"/><rect x="3" y="7" width="18" height="1.6" fill="#c4b29c"/><rect x="5" y="5.5" width="5" height="4" rx="1.8" fill="#6590cc"/><rect x="3" y="11.6" width="18" height="1.6" fill="#c4b29c"/><rect x="15" y="10.2" width="5" height="4" rx="1.8" fill="#6590cc"/><rect x="3" y="17" width="12" height="1.6" fill="#c4b29c"/><rect x="5" y="15.5" width="5" height="4" rx="1.8" fill="#6590cc"/><path d="M19.0 12.6L20.9 14.7L23.7 14.5L23.5 17.3L25.6 19.2L23.5 21.1L23.7 23.9L20.9 23.7L19.0 25.8L17.1 23.7L14.3 23.9L14.5 21.1L12.4 19.2L14.5 17.3L14.3 14.5L17.1 14.7Z" fill="#f6d682"/><circle cx="19" cy="19.2" r="2.9" fill="#fffaea"/></svg>
<div class="t" style="left:612.8px;top:791.4px;color:#c0c0c0;font-size:22.2px;letter-spacing:0.692px;-webkit-text-stroke:0.35px;">Driver Configurations</div>
<svg style="left:578.5px;top:830.3px" width="26" height="28" viewBox="0 0 26 28"><rect x="1" y="1" width="22" height="21" fill="#fbfbfd" stroke="#cdb08a" stroke-width="2"/><rect x="2" y="2" width="20" height="2.5" fill="#eadcc6"/><rect x="3" y="7" width="18" height="1.6" fill="#c4b29c"/><rect x="5" y="5.5" width="5" height="4" rx="1.8" fill="#6590cc"/><rect x="3" y="11.6" width="18" height="1.6" fill="#c4b29c"/><rect x="15" y="10.2" width="5" height="4" rx="1.8" fill="#6590cc"/><rect x="3" y="17" width="12" height="1.6" fill="#c4b29c"/><rect x="5" y="15.5" width="5" height="4" rx="1.8" fill="#6590cc"/><path d="M19.0 12.6L20.9 14.7L23.7 14.5L23.5 17.3L25.6 19.2L23.5 21.1L23.7 23.9L20.9 23.7L19.0 25.8L17.1 23.7L14.3 23.9L14.5 21.1L12.4 19.2L14.5 17.3L14.3 14.5L17.1 14.7Z" fill="#f6d682"/><circle cx="19" cy="19.2" r="2.9" fill="#fffaea"/></svg>
<div class="t" style="left:612.8px;top:825.4px;color:#c0c0c0;font-size:22.2px;letter-spacing:0.388px;-webkit-text-stroke:0.35px;">eFuse Bit Manager</div>
<svg style="left:578.5px;top:864.3px" width="26" height="28" viewBox="0 0 26 28"><rect x="1" y="1" width="22" height="21" fill="#fbfbfd" stroke="#cdb08a" stroke-width="2"/><rect x="2" y="2" width="20" height="2.5" fill="#eadcc6"/><rect x="3" y="7" width="18" height="1.6" fill="#c4b29c"/><rect x="5" y="5.5" width="5" height="4" rx="1.8" fill="#6590cc"/><rect x="3" y="11.6" width="18" height="1.6" fill="#c4b29c"/><rect x="15" y="10.2" width="5" height="4" rx="1.8" fill="#6590cc"/><rect x="3" y="17" width="12" height="1.6" fill="#c4b29c"/><rect x="5" y="15.5" width="5" height="4" rx="1.8" fill="#6590cc"/><path d="M19.0 12.6L20.9 14.7L23.7 14.5L23.5 17.3L25.6 19.2L23.5 21.1L23.7 23.9L20.9 23.7L19.0 25.8L17.1 23.7L14.3 23.9L14.5 21.1L12.4 19.2L14.5 17.3L14.3 14.5L17.1 14.7Z" fill="#f6d682"/><circle cx="19" cy="19.2" r="2.9" fill="#fffaea"/></svg>
<div class="t" style="left:612.8px;top:859.4px;color:#c0c0c0;font-size:22.2px;letter-spacing:-0.479px;-webkit-text-stroke:0.35px;">ESP-TLS</div>
<svg style="left:544px;top:902.3px" width="10" height="16" viewBox="0 0 10 16"><path d="M1.2 1.2 L8.6 8 L1.2 14.8" fill="none" stroke="#a3a3a3" stroke-width="3" stroke-linecap="round" stroke-linejoin="round"/></svg>
<svg style="left:578.5px;top:898.3px" width="26" height="28" viewBox="0 0 26 28"><rect x="1" y="1" width="22" height="21" fill="#fbfbfd" stroke="#cdb08a" stroke-width="2"/><rect x="2" y="2" width="20" height="2.5" fill="#eadcc6"/><rect x="3" y="7" width="18" height="1.6" fill="#c4b29c"/><rect x="5" y="5.5" width="5" height="4" rx="1.8" fill="#6590cc"/><rect x="3" y="11.6" width="18" height="1.6" fill="#c4b29c"/><rect x="15" y="10.2" width="5" height="4" rx="1.8" fill="#6590cc"/><rect x="3" y="17" width="12" height="1.6" fill="#c4b29c"/><rect x="5" y="15.5" width="5" height="4" rx="1.8" fill="#6590cc"/><path d="M19.0 12.6L20.9 14.7L23.7 14.5L23.5 17.3L25.6 19.2L23.5 21.1L23.7 23.9L20.9 23.7L19.0 25.8L17.1 23.7L14.3 23.9L14.5 21.1L12.4 19.2L14.5 17.3L14.3 14.5L17.1 14.7Z" fill="#f6d682"/><circle cx="19" cy="19.2" r="2.9" fill="#fffaea"/></svg>
<div class="t" style="left:612.8px;top:893.4px;color:#c0c0c0;font-size:22.2px;letter-spacing:0.428px;-webkit-text-stroke:0.35px;">ADC and ADC Calibration</div>
<svg style="left:578.5px;top:932.3px" width="26" height="28" viewBox="0 0 26 28"><rect x="1" y="1" width="22" height="21" fill="#fbfbfd" stroke="#cdb08a" stroke-width="2"/><rect x="2" y="2" width="20" height="2.5" fill="#eadcc6"/><rect x="3" y="7" width="18" height="1.6" fill="#c4b29c"/><rect x="5" y="5.5" width="5" height="4" rx="1.8" fill="#6590cc"/><rect x="3" y="11.6" width="18" height="1.6" fill="#c4b29c"/><rect x="15" y="10.2" width="5" height="4" rx="1.8" fill="#6590cc"/><rect x="3" y="17" width="12" height="1.6" fill="#c4b29c"/><rect x="5" y="15.5" width="5" height="4" rx="1.8" fill="#6590cc"/><path d="M19.0 12.6L20.9 14.7L23.7 14.5L23.5 17.3L25.6 19.2L23.5 21.1L23.7 23.9L20.9 23.7L19.0 25.8L17.1 23.7L14.3 23.9L14.5 21.1L12.4 19.2L14.5 17.3L14.3 14.5L17.1 14.7Z" fill="#f6d682"/><circle cx="19" cy="19.2" r="2.9" fill="#fffaea"/></svg>
<div class="t" style="left:612.8px;top:927.4px;color:#c0c0c0;font-size:22.2px;letter-spacing:0.498px;-webkit-text-stroke:0.35px;">Wireless Coexistence</div>
<svg style="left:578.5px;top:966.3px" width="26" height="28" viewBox="0 0 26 28"><rect x="1" y="1" width="22" height="21" fill="#fbfbfd" stroke="#cdb08a" stroke-width="2"/><rect x="2" y="2" width="20" height="2.5" fill="#eadcc6"/><rect x="3" y="7" width="18" height="1.6" fill="#c4b29c"/><rect x="5" y="5.5" width="5" height="4" rx="1.8" fill="#6590cc"/><rect x="3" y="11.6" width="18" height="1.6" fill="#c4b29c"/><rect x="15" y="10.2" width="5" height="4" rx="1.8" fill="#6590cc"/><rect x="3" y="17" width="12" height="1.6" fill="#c4b29c"/><rect x="5" y="15.5" width="5" height="4" rx="1.8" fill="#6590cc"/><path d="M19.0 12.6L20.9 14.7L23.7 14.5L23.5 17.3L25.6 19.2L23.5 21.1L23.7 23.9L20.9 23.7L19.0 25.8L17.1 23.7L14.3 23.9L14.5 21.1L12.4 19.2L14.5 17.3L14.3 14.5L17.1 14.7Z" fill="#f6d682"/><circle cx="19" cy="19.2" r="2.9" fill="#fffaea"/></svg>
<div class="t" style="left:612.8px;top:961.4px;color:#c0c0c0;font-size:22.2px;letter-spacing:0.435px;-webkit-text-stroke:0.35px;">Common ESP-related</div>
<svg style="left:544px;top:1004.3px" width="10" height="16" viewBox="0 0 10 16"><path d="M1.2 1.2 L8.6 8 L1.2 14.8" fill="none" stroke="#a3a3a3" stroke-width="3" stroke-linecap="round" stroke-linejoin="round"/></svg>
<svg style="left:578.5px;top:1000.3px" width="26" height="28" viewBox="0 0 26 28"><rect x="1" y="1" width="22" height="21" fill="#fbfbfd" stroke="#cdb08a" stroke-width="2"/><rect x="2" y="2" width="20" height="2.5" fill="#eadcc6"/><rect x="3" y="7" width="18" height="1.6" fill="#c4b29c"/><rect x="5" y="5.5" width="5" height="4" rx="1.8" fill="#6590cc"/><rect x="3" y="11.6" width="18" height="1.6" fill="#c4b29c"/><rect x="15" y="10.2" width="5" height="4" rx="1.8" fill="#6590cc"/><rect x="3" y="17" width="12" height="1.6" fill="#c4b29c"/><rect x="5" y="15.5" width="5" height="4" rx="1.8" fill="#6590cc"/><path d="M19.0 12.6L20.9 14.7L23.7 14.5L23.5 17.3L25.6 19.2L23.5 21.1L23.7 23.9L20.9 23.7L19.0 25.8L17.1 23.7L14.3 23.9L14.5 21.1L12.4 19.2L14.5 17.3L14.3 14.5L17.1 14.7Z" fill="#f6d682"/><circle cx="19" cy="19.2" r="2.9" fill="#fffaea"/></svg>
<div class="t" style="left:612.8px;top:995.4px;color:#c0c0c0;font-size:22.2px;letter-spacing:0.626px;-webkit-text-stroke:0.35px;">Ethernet</div>
<svg style="left:578.5px;top:1034.3px" width="26" height="28" viewBox="0 0 26 28"><rect x="1" y="1" width="22" height="21" fill="#fbfbfd" stroke="#cdb08a" stroke-width="2"/><rect x="2" y="2" width="20" height="2.5" fill="#eadcc6"/><rect x="3" y="7" width="18" height="1.6" fill="#c4b29c"/><rect x="5" y="5.5" width="5" height="4" rx="1.8" fill="#6590cc"/><rect x="3" y="11.6" width="18" height="1.6" fill="#c4b29c"/><rect x="15" y="10.2" width="5" height="4" rx="1.8" fill="#6590cc"/><rect x="3" y="17" width="12" height="1.6" fill="#c4b29c"/><rect x="5" y="15.5" width="5" height="4" rx="1.8" fill="#6590cc"/><path d="M19.0 12.6L20.9 14.7L23.7 14.5L23.5 17.3L25.6 19.2L23.5 21.1L23.7 23.9L20.9 23.7L19.0 25.8L17.1 23.7L14.3 23.9L14.5 21.1L12.4 19.2L14.5 17.3L14.3 14.5L17.1 14.7Z" fill="#f6d682"/><circle cx="19" cy="19.2" r="2.9" fill="#fffaea"/></svg>
<div class="t" style="left:612.8px;top:1029.4px;color:#c0c0c0;font-size:22.2px;letter-spacing:0.479px;-webkit-text-stroke:0.35px;">Event Loop Library</div>
<svg style="left:578.5px;top:1068.3px" width="26" height="28" viewBox="0 0 26 28"><rect x="1" y="1" width="22" height="21" fill="#fbfbfd" stroke="#cdb08a" stroke-width="2"/><rect x="2" y="2" width="20" height="2.5" fill="#eadcc6"/><rect x="3" y="7" width="18" height="1.6" fill="#c4b29c"/><rect x="5" y="5.5" width="5" height="4" rx="1.8" fill="#6590cc"/><rect x="3" y="11.6" width="18" height="1.6" fill="#c4b29c"/><rect x="15" y="10.2" width="5" height="4" rx="1.8" fill="#6590cc"/><rect x="3" y="17" width="12" height="1.6" fill="#c4b29c"/><rect x="5" y="15.5" width="5" height="4" rx="1.8" fill="#6590cc"/><path d="M19.0 12.6L20.9 14.7L23.7 14.5L23.5 17.3L25.6 19.2L23.5 21.1L23.7 23.9L20.9 23.7L19.0 25.8L17.1 23.7L14.3 23.9L14.5 21.1L12.4 19.2L14.5 17.3L14.3 14.5L17.1 14.7Z" fill="#f6d682"/><circle cx="19" cy="19.2" r="2.9" fill="#fffaea"/></svg>
<div class="t" style="left:612.8px;top:1063.4px;color:#c0c0c0;font-size:22.2px;letter-spacing:0.071px;-webkit-text-stroke:0.35px;">GDB Stub</div>
<svg style="left:578.5px;top:1102.3px" width="26" height="28" viewBox="0 0 26 28"><rect x="1" y="1" width="22" height="21" fill="#fbfbfd" stroke="#cdb08a" stroke-width="2"/><rect x="2" y="2" width="20" height="2.5" fill="#eadcc6"/><rect x="3" y="7" width="18" height="1.6" fill="#c4b29c"/><rect x="5" y="5.5" width="5" height="4" rx="1.8" fill="#6590cc"/><rect x="3" y="11.6" width="18" height="1.6" fill="#c4b29c"/><rect x="15" y="10.2" width="5" height="4" rx="1.8" fill="#6590cc"/><rect x="3" y="17" width="12" height="1.6" fill="#c4b29c"/><rect x="5" y="15.5" width="5" height="4" rx="1.8" fill="#6590cc"/><path d="M19.0 12.6L20.9 14.7L23.7 14.5L23.5 17.3L25.6 19.2L23.5 21.1L23.7 23.9L20.9 23.7L19.0 25.8L17.1 23.7L14.3 23.9L14.5 21.1L12.4 19.2L14.5 17.3L14.3 14.5L17.1 14.7Z" fill="#f6d682"/><circle cx="19" cy="19.2" r="2.9" fill="#fffaea"/></svg>
<div class="t" style="left:612.8px;top:1097.4px;color:#c0c0c0;font-size:22.2px;letter-spacing:0.19px;-webkit-text-stroke:0.35px;">ESP HTTP client</div>
<svg style="left:578.5px;top:1136.3px" width="26" height="28" viewBox="0 0 26 28"><rect x="1" y="1" width="22" height="21" fill="#fbfbfd" stroke="#cdb08a" stroke-width="2"/><rect x="2" y="2" width="20" height="2.5" fill="#eadcc6"/><rect x="3" y="7" width="18" height="1.6" fill="#c4b29c"/><rect x="5" y="5.5" width="5" height="4" rx="1.8" fill="#6590cc"/><rect x="3" y="11.6" width="18" height="1.6" fill="#c4b29c"/><rect x="15" y="10.2" width="5" height="4" rx="1.8" fill="#6590cc"/><rect x="3" y="17" width="12" height="1.6" fill="#c4b29c"/><rect x="5" y="15.5" width="5" height="4" rx="1.8" fill="#6590cc"/><path d="M19.0 12.6L20.9 14.7L23.7 14.5L23.5 17.3L25.6 19.2L23.5 21.1L23.7 23.9L20.9 23.7L19.0 25.8L17.1 23.7L14.3 23.9L14.5 21.1L12.4 19.2L14.5 17.3L14.3 14.5L17.1 14.7Z" fill="#f6d682"/><circle cx="19" cy="19.2" r="2.9" fill="#fffaea"/></svg>
<div class="t" style="left:612.8px;top:1131.4px;color:#c0c0c0;font-size:22.2px;letter-spacing:0.26px;-webkit-text-stroke:0.35px;">HTTP Server</div>
<svg style="left:578.5px;top:1170.3px" width="26" height="28" viewBox="0 0 26 28"><rect x="1" y="1" width="22" height="21" fill="#fbfbfd" stroke="#cdb08a" stroke-width="2"/><rect x="2" y="2" width="20" height="2.5" fill="#eadcc6"/><rect x="3" y="7" width="18" height="1.6" fill="#c4b29c"/><rect x="5" y="5.5" width="5" height="4" rx="1.8" fill="#6590cc"/><rect x="3" y="11.6" width="18" height="1.6" fill="#c4b29c"/><rect x="15" y="10.2" width="5" height="4" rx="1.8" fill="#6590cc"/><rect x="3" y="17" width="12" height="1.6" fill="#c4b29c"/><rect x="5" y="15.5" width="5" height="4" rx="1.8" fill="#6590cc"/><path d="M19.0 12.6L20.9 14.7L23.7 14.5L23.5 17.3L25.6 19.2L23.5 21.1L23.7 23.9L20.9 23.7L19.0 25.8L17.1 23.7L14.3 23.9L14.5 21.1L12.4 19.2L14.5 17.3L14.3 14.5L17.1 14.7Z" fill="#f6d682"/><circle cx="19" cy="19.2" r="2.9" fill="#fffaea"/></svg>
<div class="t" style="left:612.8px;top:1165.4px;color:#c0c0c0;font-size:22.2px;letter-spacing:-0.347px;-webkit-text-stroke:0.35px;">ESP HTTPS OTA</div>
<svg style="left:578.5px;top:1204.3px" width="26" height="28" viewBox="0 0 26 28"><rect x="1" y="1" width="22" height="21" fill="#fbfbfd" stroke="#cdb08a" stroke-width="2"/><rect x="2" y="2" width="20" height="2.5" fill="#eadcc6"/><rect x="3" y="7" width="18" height="1.6" fill="#c4b29c"/><rect x="5" y="5.5" width="5" height="4" rx="1.8" fill="#6590cc"/><rect x="3" y="11.6" width="18" height="1.6" fill="#c4b29c"/><rect x="15" y="10.2" width="5" height="4" rx="1.8" fill="#6590cc"/><rect x="3" y="17" width="12" height="1.6" fill="#c4b29c"/><rect x="5" y="15.5" width="5" height="4" rx="1.8" fill="#6590cc"/><path d="M19.0 12.6L20.9 14.7L23.7 14.5L23.5 17.3L25.6 19.2L23.5 21.1L23.7 23.9L20.9 23.7L19.0 25.8L17.1 23.7L14.3 23.9L14.5 21.1L12.4 19.2L14.5 17.3L14.3 14.5L17.1 14.7Z" fill="#f6d682"/><circle cx="19" cy="19.2" r="2.9" fill="#fffaea"/></svg>
<div class="t" style="left:612.8px;top:1199.4px;color:#c0c0c0;font-size:22.2px;letter-spacing:0.027px;-webkit-text-stroke:0.35px;">ESP HTTPS server</div>
<svg style="left:544px;top:1242.3px" width="10" height="16" viewBox="0 0 10 16"><path d="M1.2 1.2 L8.6 8 L1.2 14.8" fill="none" stroke="#a3a3a3" stroke-width="3" stroke-linecap="round" stroke-linejoin="round"/></svg>
<svg style="left:578.5px;top:1238.3px" width="26" height="28" viewBox="0 0 26 28"><rect x="1" y="1" width="22" height="21" fill="#fbfbfd" stroke="#cdb08a" stroke-width="2"/><rect x="2" y="2" width="20" height="2.5" fill="#eadcc6"/><rect x="3" y="7" width="18" height="1.6" fill="#c4b29c"/><rect x="5" y="5.5" width="5" height="4" rx="1.8" fill="#6590cc"/><rect x="3" y="11.6" width="18" height="1.6" fill="#c4b29c"/><rect x="15" y="10.2" width="5" height="4" rx="1.8" fill="#6590cc"/><rect x="3" y="17" width="12" height="1.6" fill="#c4b29c"/><rect x="5" y="15.5" width="5" height="4" rx="1.8" fill="#6590cc"/><path d="M19.0 12.6L20.9 14.7L23.7 14.5L23.5 17.3L25.6 19.2L23.5 21.1L23.7 23.9L20.9 23.7L19.0 25.8L17.1 23.7L14.3 23.9L14.5 21.1L12.4 19.2L14.5 17.3L14.3 14.5L17.1 14.7Z" fill="#f6d682"/><circle cx="19" cy="19.2" r="2.9" fill="#fffaea"/></svg>
<div class="t" style="left:612.8px;top:1233.4px;color:#c0c0c0;font-size:22.2px;letter-spacing:0.581px;-webkit-text-stroke:0.35px;">Hardware Settings</div>
<svg style="left:544px;top:1276.3px" width="10" height="16" viewBox="0 0 10 16"><path d="M1.2 1.2 L8.6 8 L1.2 14.8" fill="none" stroke="#a3a3a3" stroke-width="3" stroke-linecap="round" stroke-linejoin="round"/></svg>
<svg style="left:578.5px;top:1272.3px" width="26" height="28" viewBox="0 0 26 28"><rect x="1" y="1" width="22" height="21" fill="#fbfbfd" stroke="#cdb08a" stroke-width="2"/><rect x="2" y="2" width="20" height="2.5" fill="#eadcc6"/><rect x="3" y="7" width="18" height="1.6" fill="#c4b29c"/><rect x="5" y="5.5" width="5" height="4" rx="1.8" fill="#6590cc"/><rect x="3" y="11.6" width="18" height="1.6" fill="#c4b29c"/><rect x="15" y="10.2" width="5" height="4" rx="1.8" fill="#6590cc"/><rect x="3" y="17" width="12" height="1.6" fill="#c4b29c"/><rect x="5" y="15.5" width="5" height="4" rx="1.8" fill="#6590cc"/><path d="M19.0 12.6L20.9 14.7L23.7 14.5L23.5 17.3L25.6 19.2L23.5 21.1L23.7 23.9L20.9 23.7L19.0 25.8L17.1 23.7L14.3 23.9L14.5 21.1L12.4 19.2L14.5 17.3L14.3 14.5L17.1 14.7Z" fill="#f6d682"/><circle cx="19" cy="19.2" r="2.9" fill="#fffaea"/></svg>
<div class="t" style="left:612.8px;top:1267.4px;color:#c0c0c0;font-size:22.2px;letter-spacing:0.28px;-webkit-text-stroke:0.35px;">LCD and Touch Panel</div>
<svg style="left:578.5px;top:1306.3px" width="26" height="28" viewBox="0 0 26 28"><rect x="1" y="1" width="22" height="21" fill="#fbfbfd" stroke="#cdb08a" stroke-width="2"/><rect x="2" y="2" width="20" height="2.5" fill="#eadcc6"/><rect x="3" y="7" width="18" height="1.6" fill="#c4b29c"/><rect x="5" y="5.5" width="5" height="4" rx="1.8" fill="#6590cc"/><rect x="3" y="11.6" width="18" height="1.6" fill="#c4b29c"/><rect x="15" y="10.2" width="5" height="4" rx="1.8" fill="#6590cc"/><rect x="3" y="17" width="12" height="1.6" fill="#c4b29c"/><rect x="5" y="15.5" width="5" height="4" rx="1.8" fill="#6590cc"/><path d="M19.0 12.6L20.9 14.7L23.7 14.5L23.5 17.3L25.6 19.2L23.5 21.1L23.7 23.9L20.9 23.7L19.0 25.8L17.1 23.7L14.3 23.9L14.5 21.1L12.4 19.2L14.5 17.3L14.3 14.5L17.1 14.7Z" fill="#f6d682"/><circle cx="19" cy="19.2" r="2.9" fill="#fffaea"/></svg>
<div class="t" style="left:612.8px;top:1301.4px;color:#c0c0c0;font-size:22.2px;letter-spacing:-1.432px;-webkit-text-stroke:0.35px;">ESP NETIF Adapter</div>
</div></div>
<div class="t" style="left:1266.8px;top:311.4px;color:#c4c4c4;font-size:22.2px;letter-spacing:0.682px;-webkit-text-stroke:0.35px;">Build type</div>
<div class="a" style="left:1242px;top:342px;width:1058px;height:988px;border:2px solid #454545;border-radius:12px;background:#363636"></div>
<div class="a" style="left:1264px;top:370px;width:239px;height:32px;background:#313131;"></div>
<div class="t" style="left:1268.3px;top:369.1px;color:#c4c4c4;font-size:22.2px;letter-spacing:0.853px;-webkit-text-stroke:0.35px;">Application build type</div>
<div class="a" style="left:1520px;top:368px;width:484px;height:33px;border-radius:8px;background:linear-gradient(#6c6c6c,#626262);box-shadow:0 1px 1px rgba(0,0,0,.5), inset 0 1px 0 rgba(255,255,255,.12)"></div>
<div class="a" style="left:1530px;top:368px;width:440.5px;height:33px;overflow:hidden"><div class="t" style="left:2px;top:-1px;color:#f4f4f4;font-size:23.1px;letter-spacing:.26px;-webkit-text-stroke:.35px">Default (binary application + 2nd stage bootloader)</div></div>
<div class="a" style="left:1976px;top:371.5px;width:25px;height:25px;border-radius:6px;background:linear-gradient(#3f86f7,#2363db)"></div>
<svg style="left:1982px;top:376px" width="13" height="17" viewBox="0 0 13 17"><path d="M2.5 6L6.5 2L10.5 6M2.5 11L6.5 15L10.5 11" fill="none" stroke="#fff" stroke-width="2.2" stroke-linecap="round" stroke-linejoin="round"/></svg>
<svg style="left:2022.5px;top:370.8px" width="30" height="30" viewBox="0 0 30 30"><circle cx="15" cy="15" r="13" fill="#f2f6fd" stroke="#b9c6e2" stroke-width="3" stroke-dasharray="5 2.2"/><circle cx="15" cy="15" r="11" fill="#f8faff"/><text x="15" y="23" font-family="Liberation Sans, sans-serif" font-weight="bold" font-size="22" fill="#2c4a9c" text-anchor="middle">?</text></svg>
<svg style="left:2022.5px;top:419.2px" width="30" height="30" viewBox="0 0 30 30"><circle cx="15" cy="15" r="13" fill="#f2f6fd" stroke="#b9c6e2" stroke-width="3" stroke-dasharray="5 2.2"/><circle cx="15" cy="15" r="11" fill="#f8faff"/><text x="15" y="23" font-family="Liberation Sans, sans-serif" font-weight="bold" font-size="22" fill="#2c4a9c" text-anchor="middle">?</text></svg>
<svg style="left:2022.5px;top:461px" width="30" height="30" viewBox="0 0 30 30"><circle cx="15" cy="15" r="13" fill="#f2f6fd" stroke="#b9c6e2" stroke-width="3" stroke-dasharray="5 2.2"/><circle cx="15" cy="15" r="11" fill="#f8faff"/><text x="15" y="23" font-family="Liberation Sans, sans-serif" font-weight="bold" font-size="22" fill="#2c4a9c" text-anchor="middle">?</text></svg>
<div class="a" style="left:1262px;top:417px;width:312px;height:34px;background:#313131;"></div>
<div class="a" style="left:1265.5px;top:420px;width:25px;height:24px;border-radius:6px;background:linear-gradient(#656565,#585858);box-shadow:inset 0 1px 0 rgba(255,255,255,.15),0 1px 1px rgba(0,0,0,.4)"></div>
<div class="t" style="left:1298.6px;top:417.4px;color:#c4c4c4;font-size:22.2px;letter-spacing:0.624px;-webkit-text-stroke:0.35px;">Enable reproducible build</div>
<div class="a" style="left:1262px;top:459px;width:212px;height:34px;background:#313131;"></div>
<div class="a" style="left:1265.5px;top:462px;width:25px;height:24px;border-radius:6px;background:linear-gradient(#656565,#585858);box-shadow:inset 0 1px 0 rgba(255,255,255,.15),0 1px 1px rgba(0,0,0,.4)"></div>
<div class="t" style="left:1298.6px;top:459.4px;color:#c4c4c4;font-size:22.2px;letter-spacing:0.445px;-webkit-text-stroke:0.35px;">No Binary Blobs</div>
<div class="a" style="left:486px;top:1348px;width:1820px;height:42px;background:linear-gradient(#4b4d50,#424446);"></div>
<div class="a" style="left:486px;top:1348px;width:92px;height:42px;background:#262626;"></div>
<div class="a" style="left:486px;top:1348px;width:92px;height:5px;background:#4271a4;"></div>
<div class="t" style="left:494.8px;top:1351.8px;color:#ffffff;font-size:22.2px;letter-spacing:0.392px;-webkit-text-stroke:0.35px;">Design</div>
<div class="t" style="left:587.5px;top:1351.8px;color:#b9b9b9;font-size:22.2px;letter-spacing:0.078px;-webkit-text-stroke:0.35px;">Preview</div>
<div class="a" style="left:2320px;top:248px;width:814px;height:50px;background:linear-gradient(#4a4c4e,#414345);"></div>
<div class="a" style="left:2320px;top:298px;width:814px;height:4px;background:#4c4e50;"></div>
<div class="a" style="left:2320px;top:250px;width:196px;height:50px;background:#262626;border-radius:0 0 4px 0;"></div>
<div class="a" style="left:2320px;top:302px;width:814px;height:42px;background:#292929;"></div>
<div class="a" style="left:2858px;top:300px;width:276px;height:44px;background:#525757;"></div>
<div class="t" style="left:2326.8px;top:257.5px;color:#4f8fd0;font-size:19px;letter-spacing:-0.3px;-webkit-text-stroke:.3px">(x)=</div>
<div class="t" style="left:2368.8px;top:259.4px;color:#ffffff;font-size:22.2px;letter-spacing:0.475px;-webkit-text-stroke:0.35px;">Variables</div>
<svg style="left:2481.5px;top:267.5px" width="19" height="19" viewBox="0 0 19 19"><path d="M1 1L18 18M18 1L1 18" stroke="#e8e8e8" stroke-width="2.4" stroke-linecap="round"/></svg>
<svg style="left:2525.5px;top:262.5px" width="30" height="30" viewBox="0 0 30 30"><circle cx="8" cy="8" r="6.5" fill="#5aa0e6" stroke="#2e63a8" stroke-width="1.6"/><circle cx="6" cy="6" r="2.2" fill="#cfe4fa"/><circle cx="21" cy="20" r="6.5" fill="#5aa0e6" stroke="#2e63a8" stroke-width="1.6"/><circle cx="19" cy="18" r="2.2" fill="#cfe4fa"/></svg>
<div class="t" style="left:2564.7px;top:259.4px;color:#b4b4b4;font-size:22.2px;letter-spacing:0.33px;-webkit-text-stroke:0.35px;">Breakpo...</div>
<svg style="left:2692.5px;top:258px" width="36" height="32" viewBox="0 0 36 32"><g fill="none" stroke="#3f7fcf" stroke-width="2.2" stroke-linecap="round"><path d="M4 12C6 5 9 3 13 4M32 4C28 2 24 4 23 11"/><circle cx="7" cy="17" r="5.2" fill="#dbeafc"/><circle cx="20" cy="17" r="5.2" fill="#dbeafc"/><path d="M12 16Q13.5 14.5 15 16"/></g><path d="M13 26L18 31M18 26L13 31M21 27H27M21 30.5H27" stroke="#3f7fcf" stroke-width="1.8"/></svg>
<div class="t" style="left:2734.8px;top:259.4px;color:#b4b4b4;font-size:22.2px;letter-spacing:0.183px;-webkit-text-stroke:0.35px;">Expressi...</div>
<svg style="left:2864px;top:261px" width="30" height="32" viewBox="0 0 30 32"><rect x="3" y="1" width="15" height="11" fill="#dbe6f8" stroke="#8ea3c8" stroke-width="1.6"/><rect x="3" y="1" width="15" height="3.5" fill="#8db2e8"/><path d="M10.5 12V18M4.5 23V18H23.5V23" fill="none" stroke="#5b7fc0" stroke-width="2.2"/><rect x="0.8" y="22.8" width="8.4" height="8.4" fill="#f2d670" stroke="#b8962e" stroke-width="1.6"/><rect x="19.8" y="22.8" width="8.4" height="8.4" fill="#f2d670" stroke="#b8962e" stroke-width="1.6"/></svg>
<div class="t" style="left:2902.3px;top:259.4px;color:#b4b4b4;font-size:22.2px;letter-spacing:0.407px;-webkit-text-stroke:0.35px;">Peripher...</div>
<svg style="left:3052px;top:264px" width="20" height="8" viewBox="0 0 20 8"><rect x="1.2" y="1.2" width="17.6" height="5.6" fill="none" stroke="#d6d6d8" stroke-width="2.4"/></svg>
<svg style="left:3096px;top:264px" width="20" height="20" viewBox="0 0 20 20"><rect x="1.2" y="1.2" width="17.6" height="17.6" fill="none" stroke="#d6d6d8" stroke-width="2.4"/><path d="M1 5.6H19" stroke="#d6d6d8" stroke-width="2.4"/></svg>
<svg style="left:2864px;top:308px" width="34" height="30" viewBox="0 0 34 30"><path d="M6 10H33V22L27 29H6Z" fill="#f5f1e2" stroke="#c9a45c" stroke-width="2" stroke-linejoin="round"/><path d="M8 23H12M14.5 23H18.5M21 23H25" stroke="#3d57b8" stroke-width="3"/><text x="3" y="19" font-family="Liberation Serif, serif" font-style="italic" font-size="24" fill="#3553b5">x</text></svg>
<div class="a" style="left:2902px;top:301px;width:44px;height:42px;border:2px solid #6a6e70;background:#4f545466"></div>
<svg style="left:2908px;top:308px" width="34" height="30" viewBox="0 0 34 30"><path d="M1 15H15M10 9.5L16 15L10 20.5" fill="none" stroke="#e6b54a" stroke-width="3.4" stroke-linejoin="round"/><path d="M21.5 4V27M21.5 11H26M21.5 19H26M21.5 27H26" fill="none" stroke="#5b7fc8" stroke-width="2"/><path d="M17 9L21.5 2L26 9Z" fill="#5b7fc8"/><rect x="27" y="8" width="6" height="6" fill="#e0505a"/><rect x="27" y="16" width="6" height="6" fill="#e0505a"/><rect x="27" y="24" width="6" height="6" fill="#e0505a"/><path d="M27 3H33" stroke="#8fa0c8" stroke-width="2"/></svg>
<svg style="left:2955px;top:310px" width="28" height="26" viewBox="0 0 28 26"><rect x="1" y="1" width="19" height="17" fill="#6e7071" stroke="#86898b" stroke-width="2"/><rect x="6" y="6" width="20" height="19" fill="#747677" stroke="#8c8f91" stroke-width="2"/><path d="M10 15.5H22" stroke="#9a9d9f" stroke-width="3"/></svg>
<svg style="left:3008px;top:306px" width="32" height="32" viewBox="0 0 32 32"><rect x="2" y="8" width="24" height="22" fill="#f4f6fb" stroke="#c9a45c" stroke-width="2"/><rect x="2" y="8" width="24" height="5" fill="#4f86d8"/><path d="M25 0V12M19 6H31" stroke="#f0c04a" stroke-width="3.4"/><path d="M8 27C14 27 22 24 24 15" fill="none" stroke="#f3d88b" stroke-width="3"/></svg>
<svg style="left:3055px;top:306px" width="32" height="32" viewBox="0 0 32 32"><rect x="2" y="12" width="24" height="18" fill="#727476" stroke="#858789" stroke-width="2"/><path d="M20 2L29 8L24 12L21 18L13 10L18 8Z" fill="#7d7f81"/><path d="M14 17L19 12" stroke="#8e9092" stroke-width="2.4"/></svg>
<svg style="left:3107px;top:309px" width="10" height="30" viewBox="0 0 10 30"><circle cx="5" cy="4" r="3.2" fill="#fff" stroke="#262626" stroke-width="1"/><circle cx="5" cy="13.8" r="3.2" fill="#fff" stroke="#262626" stroke-width="1"/><circle cx="5" cy="23.6" r="3.2" fill="#fff" stroke="#262626" stroke-width="1"/></svg>
<div class="a" style="left:2320px;top:1056px;width:814px;height:6px;background:#f0f0f0;"></div>
<div class="a" style="left:2320px;top:1062px;width:785px;height:300px;background:#3f4346;"></div>
<div class="a" style="left:3105px;top:1062px;width:29px;height:329px;background:#383838;"></div>
<div class="a" style="left:2320px;top:1362px;width:814px;height:29px;background:#383838;"></div>
<div class="a" style="left:484px;top:1402px;width:2650px;height:50px;background:linear-gradient(#4b4d4f,#404244);"></div>
<div class="a" style="left:484px;top:1452px;width:2650px;height:3px;background:#4e5052;"></div>
<div class="a" style="left:484px;top:1404px;width:184px;height:51px;background:#262626;"></div>
<div class="a" style="left:484px;top:1455px;width:2650px;height:28px;background:#2d2d2d;"></div>
<div class="a" style="left:484px;top:1482px;width:2650px;height:2px;background:#3c3c3c;"></div>
<svg style="left:496px;top:1414px" width="28" height="28" viewBox="0 0 28 28"><rect x="1" y="1" width="26" height="20" rx="2" fill="#3f6fc0" stroke="#2b4f95" stroke-width="2"/><rect x="4" y="4" width="20" height="14" fill="#f2f5fc"/><path d="M7 8.5H18M7 13H21" stroke="#1f2f6e" stroke-width="2.6"/><path d="M4 25H24" stroke="#3f6fc0" stroke-width="3"/><path d="M7 22H21" stroke="#6f8fc8" stroke-width="2"/></svg>
<div class="t" style="left:532.9px;top:1414.1px;color:#ffffff;font-size:22.2px;letter-spacing:0.271px;-webkit-text-stroke:0.35px;">Console</div>
<svg style="left:634.5px;top:1423px" width="19" height="19" viewBox="0 0 19 19"><path d="M1 1L18 18M18 1L1 18" stroke="#e8e8e8" stroke-width="2.4" stroke-linecap="round"/></svg>
<div class="a" style="left:677px;top:1413px;width:34px;height:32px;font-family:'Liberation Sans',sans-serif;font-size:14.5px;line-height:14.5px;color:#3f8fd8;letter-spacing:-.2px">1010<br>0101</div>
<div class="t" style="left:717.0px;top:1414.1px;color:#b4b4b4;font-size:22.2px;letter-spacing:0.277px;-webkit-text-stroke:0.35px;">Registers</div>
<svg style="left:837px;top:1416px" width="32" height="30" viewBox="0 0 32 30"><rect x="1" y="3" width="20" height="9" fill="#5fae5a" stroke="#3a7a3a" stroke-width="1.6"/><path d="M3 7.5H13" stroke="#e9f6e6" stroke-width="2.4"/><rect x="12" y="6" width="16" height="14" fill="#dfe8f7" stroke="#c4a868" stroke-width="1.6"/><circle cx="22" cy="21" r="7.5" fill="#3aa13f" stroke="#237a2a" stroke-width="1.4"/><path d="M19.5 16.5L26 21L19.5 25.5Z" fill="#fff"/></svg>
<div class="t" style="left:875.0px;top:1414.1px;color:#b4b4b4;font-size:22.2px;letter-spacing:0.286px;-webkit-text-stroke:0.35px;">Progress</div>
<svg style="left:986px;top:1414px" width="30" height="32" viewBox="0 0 30 32"><path d="M1 1H20Q26 6 28 1V31H1Z" fill="#eef2fb" stroke="#c9a45c" stroke-width="1.6"/><path d="M20 1V31" stroke="#b9c4dd" stroke-width="2"/><circle cx="11" cy="9" r="5" fill="#e03a3a" stroke="#a51f1f" stroke-width="1.2"/><path d="M11 16L18 28H4Z" fill="#f2b01e" stroke="#b97c0e" stroke-width="1.4"/></svg>
<div class="t" style="left:1026.3px;top:1414.1px;color:#b4b4b4;font-size:22.2px;letter-spacing:0.431px;-webkit-text-stroke:0.35px;">Problems</div>
<svg style="left:1145px;top:1415px" width="30" height="30" viewBox="0 0 30 30"><path d="M9 1H21L29 9V21L21 29H9L1 21V9Z" fill="#8fa4e8" stroke="#c9d3f5" stroke-width="2"/><path d="M11 7L23 15L11 23Z" fill="#f5f7ff"/></svg>
<div class="t" style="left:1185.0px;top:1414.1px;color:#b4b4b4;font-size:22.2px;letter-spacing:0.321px;-webkit-text-stroke:0.35px;">Executables</div>
<svg style="left:1330px;top:1414px" width="32" height="32" viewBox="0 0 32 32"><rect x="13" y="2" width="17" height="15" fill="#1f3fd8" stroke="#eef0f6" stroke-width="2.6"/><rect x="17" y="5" width="6" height="4" fill="#4f7ff0"/><path d="M1 30L5 22L14 13L18 17L10 27Z" fill="#d9d9cf" stroke="#8d8d80" stroke-width="1"/><path d="M6 22L11 27" stroke="#b9c02a" stroke-width="2.4"/><path d="M1 30L4 24L8 29Z" fill="#fff"/></svg>
<div class="t" style="left:1371.6px;top:1414.1px;color:#b4b4b4;font-size:22.2px;letter-spacing:0.312px;-webkit-text-stroke:0.35px;">Terminal</div>
<svg style="left:1482px;top:1416px" width="28" height="28" viewBox="0 0 28 28"><rect x="1" y="1" width="18" height="15" fill="#e8eefb" stroke="#5b7fc8" stroke-width="2"/><rect x="1" y="1" width="18" height="4" fill="#5b8fe0"/><ellipse cx="19" cy="20" rx="5.5" ry="6.5" fill="#5f9c63" stroke="#2f6f6a" stroke-width="1.6"/><path d="M11 14L14 17M11 26L14 23M27 14L24 17M27 26L24 23" stroke="#4f9a94" stroke-width="1.8"/></svg>
<div class="t" style="left:1519.0px;top:1414.1px;color:#b4b4b4;font-size:22.2px;letter-spacing:0.51px;-webkit-text-stroke:0.35px;">Debugger Console</div>
<svg style="left:1739px;top:1416px" width="20" height="28" viewBox="0 0 20 28"><defs><linearGradient id="cyl" x1="0" x2="1"><stop offset="0" stop-color="#3f68d8"/><stop offset=".3" stop-color="#c9d8fb"/><stop offset=".55" stop-color="#7f9df0"/><stop offset="1" stop-color="#2f55c4"/></linearGradient></defs><path d="M1 4V23A9 3.5 0 0 0 19 23V4Z" fill="url(#cyl)" stroke="#2c4fb8" stroke-width="1.4"/><ellipse cx="10" cy="4" rx="9" ry="3.2" fill="#e6ecfb" stroke="#4f74dc" stroke-width="1.4"/></svg>
<div class="t" style="left:1772.7px;top:1414.1px;color:#b4b4b4;font-size:22.2px;letter-spacing:0.612px;-webkit-text-stroke:0.35px;">Memory</div>
<svg style="left:1878px;top:1416px" width="28" height="28" viewBox="0 0 28 28"><circle cx="14" cy="14" r="12.3" fill="#cfdcf2" stroke="#5b9be6" stroke-width="3.4"/><path d="M6 14Q14 7 22 14Q14 21 6 14Z" fill="#f7f3e4" stroke="#3f5fa8" stroke-width="1.4"/><circle cx="14" cy="14" r="3" fill="#d8b24a" stroke="#3f5fa8" stroke-width="1"/></svg>
<div class="t" style="left:1917.2px;top:1414.1px;color:#b4b4b4;font-size:22.2px;letter-spacing:0.488px;-webkit-text-stroke:0.35px;">Build Hints</div>
<div class="a" style="left:2732px;top:1406px;width:308px;height:44px;background:#525757;"></div>
<svg style="left:2741px;top:1413px" width="32" height="32" viewBox="0 0 32 32"><path d="M1 1H14L20 7V26H1Z" fill="#f3f1e6" stroke="#c9a45c" stroke-width="1.6"/><path d="M4 8H13M4 12H16M4 16H16M4 20H14" stroke="#4f6fc7" stroke-width="1.8"/><path d="M19 18L29 28M29 18L19 28" stroke="#e6e6e6" stroke-width="3.4"/><path d="M19 18L29 28M29 18L19 28" stroke="#555" stroke-width="1.6"/></svg>
<svg style="left:2783px;top:1412px" width="34" height="34" viewBox="0 0 34 34"><rect x="4" y="2" width="26" height="26" fill="#dfe8f8" stroke="#c9a45c" stroke-width="1.6"/><rect x="21" y="4" width="7" height="6" fill="#3f6fc0"/><rect x="21" y="13" width="7" height="6" fill="#3f6fc0"/><rect x="21" y="22" width="7" height="5" fill="#3f6fc0"/><rect x="1" y="19" width="15" height="13" rx="1.5" fill="#e8b33a" stroke="#9a6d12" stroke-width="1.6"/><path d="M4.5 19V15A4 4 0 0 1 12.5 15V19" fill="none" stroke="#c9952a" stroke-width="2.4"/><rect x="7.3" y="23" width="2.4" height="5" fill="#5a3d08"/></svg>
<svg style="left:2827.5px;top:1413px" width="34" height="32" viewBox="0 0 34 32"><path d="M1 1H14L20 7V26H1Z" fill="#f3f1e6" stroke="#c9a45c" stroke-width="1.6"/><path d="M4 8H13M4 12H12M4 16H10M4 20H9" stroke="#4f6fc7" stroke-width="1.8"/><path d="M30 6V20H14M20 14L13 20L20 26" fill="none" stroke="#e0a63e" stroke-width="3.4" stroke-linejoin="round"/></svg>
<svg style="left:2886px;top:1412px" width="32" height="34" viewBox="0 0 32 34"><rect x="1" y="12" width="26" height="20" fill="#f4f6fb" stroke="#9fa9c4" stroke-width="1.6"/><rect x="1" y="12" width="26" height="5" fill="#5b8fe0"/><path d="M22 1L31 8L26 12L22 19L15 12L20 9Z" fill="#3ea14a" stroke="#2a7a34" stroke-width="1.2"/><path d="M12 23L18 16" stroke="#555" stroke-width="2.2"/></svg>
<svg style="left:2930px;top:1412px" width="28" height="28" viewBox="0 0 28 28"><rect x="1" y="1" width="26" height="20" rx="2" fill="#3f6fc0" stroke="#2b4f95" stroke-width="2"/><rect x="4" y="4" width="20" height="14" fill="#f2f5fc"/><path d="M7 8.5H18M7 13H21" stroke="#1f2f6e" stroke-width="2.6"/><path d="M4 25H24" stroke="#3f6fc0" stroke-width="3"/><path d="M7 22H21" stroke="#6f8fc8" stroke-width="2"/></svg>
<svg style="left:2963.5px;top:1427px" width="12" height="8" viewBox="0 0 12 8"><path d="M0 0H12L6 8Z" fill="#111"/></svg>
<svg style="left:2987.5px;top:1409px" width="32" height="34" viewBox="0 0 32 34"><rect x="1" y="11" width="24" height="21" fill="#f4f6fb" stroke="#c9a45c" stroke-width="2"/><rect x="1" y="11" width="24" height="5" fill="#4f86d8"/><path d="M24 1V13M18 7H30" stroke="#f0c04a" stroke-width="3.4"/><path d="M6 29C12 29 20 26 22 18" fill="none" stroke="#f3d88b" stroke-width="3"/></svg>
<svg style="left:3023.2px;top:1427px" width="12" height="8" viewBox="0 0 12 8"><path d="M0 0H12L6 8Z" fill="#111"/></svg>
<svg style="left:3052px;top:1418.5px" width="20" height="8" viewBox="0 0 20 8"><rect x="1.2" y="1.2" width="17.6" height="5.6" fill="none" stroke="#d6d6d8" stroke-width="2.4"/></svg>
<svg style="left:3096px;top:1418.5px" width="20" height="20" viewBox="0 0 20 20"><rect x="1.2" y="1.2" width="17.6" height="17.6" fill="none" stroke="#d6d6d8" stroke-width="2.4"/><path d="M1 5.6H19" stroke="#d6d6d8" stroke-width="2.4"/></svg>
<div class="t" style="left:489.5px;top:1451.6px;color:#bdbdbd;font-size:22.2px;letter-spacing:0.49px;-webkit-text-stroke:0.35px;">JSON Configuration Server Console</div>
<div class="a mono" style="left:487.5px;top:1486px;width:2616px;height:392px;overflow:hidden">-- Adding linker script /Users/pedrominatel/esp/v5.2.1/esp-idf/components/esp_rom/esp32c6/ld/esp32c6.rom.heap.ld
-- Adding linker script /Users/pedrominatel/esp/v5.2.1/esp-idf/components/soc/esp32c6/ld/esp32c6.peripherals.ld
-- Components: app_trace app_update bootloader bootloader_support bt cmock console cxx driver efuse esp-tls esp_adc esp_app_format esp_bootloader_format esp_coex esp_common esp_eth esp_event esp_gdbstub esp_hid
-- Component paths: /Users/pedrominatel/esp/v5.2.1/esp-idf/components/app_trace /Users/pedrominatel/esp/v5.2.1/esp-idf/components/app_update /Users/pedrominatel/esp/v5.2.1/esp-idf/components/bootloader
-- Configuring done
-- Generating done
-- Build files have been written to: /Users/pedrominatel/workspace/blink/build
Running ninja in directory /Users/pedrominatel/workspace/blink/build
Executing &quot;ninja confserver&quot;...
[0/1] cd /Users/pedrominatel/workspace/blink/build &amp;&amp; /Users/pedrominatel/.espressif/python_env/idf5.2_py3.9_env/bin/python /Users/pedrominatel/esp/v5.2.1/esp-idf/tools/kconfig_new/confserver.py
Server running, waiting for requests on stdin...
{&quot;version&quot;: 2, &quot;values&quot;: {&quot;SOC_ADC_SUPPORTED&quot;: true, &quot;SOC_DEDICATED_GPIO_SUPPORTED&quot;: true, &quot;SOC_UART_SUPPORTED&quot;: true, &quot;SOC_GDMA_SUPPORTED&quot;: true, &quot;SOC_AHB_GDMA_SUPPORTED&quot;: true, &quot;SOC_GPTIMER_SUPPORTED&quot;: true,</div>
<div class="a" style="left:3105px;top:1484px;width:29px;height:396px;background:#333333;"></div>
<div class="a" style="left:3105px;top:1484px;width:1px;height:396px;background:#3e3e3e;"></div>
<div class="a" style="left:3112px;top:1735px;width:16px;height:139px;border-radius:8px;background:#9b9b9b"></div>
<div class="a" style="left:484px;top:1880px;width:2650px;height:30px;background:#383838;"></div>
<div class="a" style="left:484px;top:1880px;width:2621px;height:1px;background:#444;"></div>
<div class="a" style="left:490px;top:1888px;width:36px;height:16px;border-radius:8px;background:#9b9b9b"></div>
<div class="btn" style="left:116px;top:136px;width:72px;height:52px"></div>
<div class="btn" style="left:198px;top:136px;width:72px;height:52px"></div>
<div class="btn" style="left:280px;top:136px;width:72px;height:52px"></div>
<div class="btn" style="left:362px;top:136px;width:300px;height:52px"></div>
<div class="btn" style="left:672px;top:136px;width:500px;height:52px"></div>
<div class="btn" style="left:1234px;top:136px;width:400px;height:52px"></div>
<svg style="left:137px;top:147px" width="30" height="30" viewBox="0 0 30 30"><path d="M12 10L26 27" stroke="#9a5f22" stroke-width="8" stroke-linecap="round"/><path d="M13 10.5L25 25" stroke="#c98a44" stroke-width="3" stroke-linecap="round"/><path d="M1.5 11C2 5 8 0.5 16 1.5L17 4.5C13 4 11 6 13.5 9.5L9.5 13.5C7 11 4.5 11.5 4.5 14Z" fill="#c6c9cf" stroke="#8d9097" stroke-width="1.2" stroke-linejoin="round"/><path d="M4 9C5 5.5 9 3.2 14 3.2" fill="none" stroke="#f4f5f7" stroke-width="1.8"/></svg>
<svg style="left:220px;top:148px" width="28" height="28" viewBox="0 0 28 28"><defs><radialGradient id="pg234" cx="50%" cy="30%" r="75%"><stop offset="0" stop-color="#8fd47c"/><stop offset="0.55" stop-color="#3f9e3c"/><stop offset="1" stop-color="#2b7a2b"/></radialGradient></defs><circle cx="14" cy="14" r="13" fill="url(#pg234)" stroke="#2c6e2c" stroke-width="1.2"/><path d="M9.4 3.5L21.2 14L9.4 24.5Z" fill="#fff"/></svg>
<svg style="left:305px;top:151px" width="22" height="22" viewBox="0 0 22 22"><rect x="1.5" y="1.5" width="19" height="19" rx="1.5" fill="#d9383a" stroke="#f08c86" stroke-width="2.4"/></svg>
<svg style="left:374px;top:148px" width="28" height="28" viewBox="0 0 28 28"><defs><radialGradient id="pg388" cx="50%" cy="30%" r="75%"><stop offset="0" stop-color="#8fd47c"/><stop offset="0.55" stop-color="#3f9e3c"/><stop offset="1" stop-color="#2b7a2b"/></radialGradient></defs><circle cx="14" cy="14" r="13" fill="url(#pg388)" stroke="#2c6e2c" stroke-width="1.2"/><path d="M9.4 3.5L21.2 14L9.4 24.5Z" fill="#fff"/></svg>
<div class="t" style="left:418.5px;top:142px;line-height:40px;height:40px;color:#f2f2f2;font-size:23.5px;letter-spacing:-.9px;-webkit-text-stroke:.4px">Run</div>
<svg style="left:629px;top:158px" width="18" height="11" viewBox="0 0 18 11"><path d="M1.5 1.5L9 9L16.5 1.5" fill="none" stroke="#8a8d8f" stroke-width="3" stroke-linecap="round" stroke-linejoin="round"/></svg>
<svg style="left:683px;top:147px" width="30" height="30" viewBox="0 0 30 30"><rect x="1" y="1" width="28" height="28" fill="#f4f6fb" stroke="#d2b36a" stroke-width="2"/><rect x="2" y="2" width="26" height="5" fill="#6f9fe0"/><text x="15" y="25" font-family="Liberation Sans, sans-serif" font-weight="bold" font-size="20" fill="#3f63a8" text-anchor="middle">c</text></svg>
<div class="t" style="left:728px;top:142px;line-height:40px;height:40px;color:#f2f2f2;font-size:23.5px;letter-spacing:.1px;-webkit-text-stroke:.4px">blink</div>
<svg style="left:1098px;top:158px" width="18" height="11" viewBox="0 0 18 11"><path d="M1.5 1.5L9 9L16.5 1.5" fill="none" stroke="#8a8d8f" stroke-width="3" stroke-linecap="round" stroke-linejoin="round"/></svg>
<svg style="left:1131px;top:147px" width="30" height="30" viewBox="0 0 30 30"><g transform="translate(15 15)" fill="#d8d5c4"><rect x="-3.6" y="-15" width="7.2" height="8" rx="1.5" transform="rotate(0)"/><rect x="-3.6" y="-15" width="7.2" height="8" rx="1.5" transform="rotate(45)"/><rect x="-3.6" y="-15" width="7.2" height="8" rx="1.5" transform="rotate(90)"/><rect x="-3.6" y="-15" width="7.2" height="8" rx="1.5" transform="rotate(135)"/><rect x="-3.6" y="-15" width="7.2" height="8" rx="1.5" transform="rotate(180)"/><rect x="-3.6" y="-15" width="7.2" height="8" rx="1.5" transform="rotate(225)"/><rect x="-3.6" y="-15" width="7.2" height="8" rx="1.5" transform="rotate(270)"/><rect x="-3.6" y="-15" width="7.2" height="8" rx="1.5" transform="rotate(315)"/><circle r="10.5"/></g><circle cx="15" cy="15" r="4.3" fill="#525757"/></svg>
<div class="t" style="left:1186px;top:142px;line-height:40px;height:40px;color:#f2f2f2;font-size:23.5px;-webkit-text-stroke:.4px">on:</div>
<svg style="left:1244px;top:146px" width="32" height="32" viewBox="0 0 32 32"><rect width="32" height="32" fill="#fcfcfc"/><circle cx="16" cy="16" r="10.5" fill="none" stroke="#c9a46c" stroke-width="2"/><path d="M16 2V9M16 23V30M2 16H9M23 16H30" stroke="#c9a46c" stroke-width="2"/><ellipse cx="16" cy="16" rx="5" ry="6.5" fill="#4f9be8"/></svg>
<div class="t" style="left:1290px;top:142px;line-height:40px;height:40px;color:#f2f2f2;font-size:23.5px;letter-spacing:.15px;-webkit-text-stroke:.4px">esp32c6</div>
<svg style="left:1561px;top:158px" width="18" height="11" viewBox="0 0 18 11"><path d="M1.5 1.5L9 9L16.5 1.5" fill="none" stroke="#8a8d8f" stroke-width="3" stroke-linecap="round" stroke-linejoin="round"/></svg>
<svg style="left:1593px;top:147px" width="30" height="30" viewBox="0 0 30 30"><g transform="translate(15 15)" fill="#d8d5c4"><rect x="-3.6" y="-15" width="7.2" height="8" rx="1.5" transform="rotate(0)"/><rect x="-3.6" y="-15" width="7.2" height="8" rx="1.5" transform="rotate(45)"/><rect x="-3.6" y="-15" width="7.2" height="8" rx="1.5" transform="rotate(90)"/><rect x="-3.6" y="-15" width="7.2" height="8" rx="1.5" transform="rotate(135)"/><rect x="-3.6" y="-15" width="7.2" height="8" rx="1.5" transform="rotate(180)"/><rect x="-3.6" y="-15" width="7.2" height="8" rx="1.5" transform="rotate(225)"/><rect x="-3.6" y="-15" width="7.2" height="8" rx="1.5" transform="rotate(270)"/><rect x="-3.6" y="-15" width="7.2" height="8" rx="1.5" transform="rotate(315)"/><circle r="10.5"/></g><circle cx="15" cy="15" r="4.3" fill="#525757"/></svg>
<div class="a" style="left:1640px;top:148.5px;width:4px;height:4.0px;background:#c9cbc4;"></div>
<div class="a" style="left:1640px;top:156.1px;width:4px;height:4.0px;background:#c9cbc4;"></div>
<div class="a" style="left:1640px;top:163.7px;width:4px;height:4.0px;background:#c9cbc4;"></div>
<div class="a" style="left:1640px;top:171.3px;width:4px;height:4.0px;background:#c9cbc4;"></div>
<svg style="left:1655px;top:146px" width="32" height="32" viewBox="0 0 32 32"><rect x="1.5" y="10.5" width="24" height="20" fill="#f4f6fb" stroke="#c9a45c" stroke-width="2"/><rect x="1.5" y="10.5" width="24" height="5" fill="#4f86d8"/><path d="M24 1V14M17.5 7.5H30.5" stroke="#f0c04a" stroke-width="3.4"/><path d="M5 28C12 28 20 25 23 18" fill="none" stroke="#f3d88b" stroke-width="3"/></svg>
<svg style="left:1691.5px;top:160.5px" width="11" height="8" viewBox="0 0 11 8"><path d="M0 0H11L5.5 7.5Z" fill="#0a0a0a"/></svg>
<svg style="left:1716px;top:147px" width="30" height="30" viewBox="0 0 30 30"><path d="M1 1H25L29 5V29H1Z" fill="#767a7b" stroke="#8e9193" stroke-width="1.6"/><rect x="6" y="2" width="16" height="10" fill="#6f7274"/><rect x="7" y="18" width="16" height="11" fill="#6b6e70"/><rect x="11" y="21" width="4" height="6" fill="#808485"/></svg>
<svg style="left:1759px;top:145px" width="32" height="32" viewBox="0 0 32 32"><rect x="1" y="1" width="18" height="18" fill="#6f7274" stroke="#8a8d8f" stroke-width="1.4"/><rect x="6" y="6" width="18" height="18" fill="#737678" stroke="#8a8d8f" stroke-width="1.4"/><path d="M11 11H27L31 15V31H11Z" fill="#767a7b" stroke="#8e9193" stroke-width="1.4"/><rect x="15" y="22" width="11" height="9" fill="#6b6e70"/><rect x="15" y="12" width="10" height="5" fill="#6f7274"/></svg>
<div class="a" style="left:1802px;top:141px;width:2px;height:42px;background:#44484a;"></div>
<svg style="left:1817px;top:145px" width="30" height="34" viewBox="0 0 30 34"><path d="M1 1H15L22 8V30H1Z" fill="#f6f7fb" stroke="#c9a45c" stroke-width="1.6"/><path d="M15 1V8H22" fill="#e9dcb8" stroke="#c9a45c" stroke-width="1.4"/><path d="M4 8H12M4 12H17" stroke="#5b7fd0" stroke-width="2"/><text x="3" y="30" font-family="Liberation Sans, sans-serif" font-weight="bold" font-size="17" fill="#1f2f7e" letter-spacing="-0.8">010</text></svg>
<div class="a" style="left:1853.5px;top:148.5px;width:4.0px;height:4.0px;background:#c9cbc4;"></div>
<div class="a" style="left:1853.5px;top:156.1px;width:4.0px;height:4.0px;background:#c9cbc4;"></div>
<div class="a" style="left:1853.5px;top:163.7px;width:4.0px;height:4.0px;background:#c9cbc4;"></div>
<div class="a" style="left:1853.5px;top:171.3px;width:4.0px;height:4.0px;background:#c9cbc4;"></div>
<svg style="left:1869px;top:144px" width="34" height="34" viewBox="0 0 34 34"><path d="M29 3C31 14 26 21 15 21V28L2 17.5L15 7V14C22 14 27 10 29 3Z" fill="#f7c95a" stroke="#c98a1e" stroke-width="2" stroke-linejoin="round"/><path d="M14 10V16C20 16 24 14 27 10" fill="none" stroke="#fdeeb8" stroke-width="2"/></svg>
<svg style="left:1911px;top:144px" width="34" height="34" viewBox="0 0 34 34"><path d="M5 3C3 14 8 21 19 21V28L32 17.5L19 7V14C12 14 7 10 5 3Z" fill="#767a7b" stroke="#8c8f91" stroke-width="1.6" stroke-linejoin="round"/></svg>
<div class="a" style="left:1952px;top:148.5px;width:4px;height:4.0px;background:#c9cbc4;"></div>
<div class="a" style="left:1952px;top:156.1px;width:4px;height:4.0px;background:#c9cbc4;"></div>
<div class="a" style="left:1952px;top:163.7px;width:4px;height:4.0px;background:#c9cbc4;"></div>
<div class="a" style="left:1952px;top:171.3px;width:4px;height:4.0px;background:#c9cbc4;"></div>
<svg style="left:1969px;top:146px" width="28" height="30" viewBox="0 0 28 30"><rect x="1" y="1" width="26" height="21" rx="2" fill="#3f63c8" stroke="#2b4aa0" stroke-width="2"/><rect x="4.5" y="4.5" width="19" height="14" fill="#f4f6fc"/><path d="M7.5 9H17M7.5 13.5H20" stroke="#1f2f6e" stroke-width="2.6"/><path d="M3 26H25" stroke="#3f63c8" stroke-width="3"/><path d="M6 28.5H10M18 28.5H22" stroke="#2b4aa0" stroke-width="2"/></svg>
<div class="a" style="left:2005.5px;top:148.5px;width:4.0px;height:4.0px;background:#c9cbc4;"></div>
<div class="a" style="left:2005.5px;top:156.1px;width:4.0px;height:4.0px;background:#c9cbc4;"></div>
<div class="a" style="left:2005.5px;top:163.7px;width:4.0px;height:4.0px;background:#c9cbc4;"></div>
<div class="a" style="left:2005.5px;top:171.3px;width:4.0px;height:4.0px;background:#c9cbc4;"></div>
<svg style="left:2024px;top:149px" width="26" height="28" viewBox="0 0 26 28"><circle cx="12" cy="12" r="7.5" fill="#6f9be0" stroke="#d9e4f5" stroke-width="2.4"/><circle cx="12" cy="12" r="3.6" fill="#3f6fc0"/><path d="M2 2L24 25" stroke="#b9bcc4" stroke-width="2.6" stroke-linecap="round"/></svg>
<div class="a" style="left:2064px;top:141px;width:2px;height:42px;background:#44484a;"></div>
<svg style="left:2077px;top:147px" width="32" height="30" viewBox="0 0 32 30"><rect x="1" y="3" width="7" height="24" fill="#767a7b"/><path d="M12 2L31 15L12 28Z" fill="#767a7b"/></svg>
<svg style="left:2126px;top:149px" width="24" height="26" viewBox="0 0 24 26"><rect x="0" y="0" width="8.5" height="26" fill="#767a7b"/><rect x="13.5" y="0" width="8.5" height="26" fill="#767a7b"/></svg>
<svg style="left:2170px;top:150px" width="23" height="23" viewBox="0 0 23 23"><rect x="1.5" y="1.5" width="19" height="19" fill="#6f7274" stroke="#808485" stroke-width="3"/></svg>
<svg style="left:2208px;top:146px" width="32" height="32" viewBox="0 0 32 32"><path d="M5 25L12 8L22 24L27 6" fill="none" stroke="#767a7b" stroke-width="3"/><circle cx="5" cy="25" r="5" fill="#767a7b"/><circle cx="27" cy="6" r="4.5" fill="#767a7b"/><path d="M24 26L30 20" stroke="#767a7b" stroke-width="2.6"/></svg>
<svg style="left:2253px;top:148px" width="32" height="30" viewBox="0 0 32 30"><path d="M2 4H16V16" fill="none" stroke="#767a7b" stroke-width="4.4"/><path d="M8 14H24L16 24Z" fill="#767a7b"/><path d="M1 27H9M22 27H30" stroke="#767a7b" stroke-width="3.4"/></svg>
<svg style="left:2297px;top:147px" width="32" height="30" viewBox="0 0 32 30"><path d="M5 17C5 5 24 5 24 15" fill="none" stroke="#767a7b" stroke-width="4.4"/><path d="M16 13H32L24 23Z" fill="#767a7b"/><path d="M9 27H19" stroke="#767a7b" stroke-width="3.4"/></svg>
<svg style="left:2342px;top:146px" width="32" height="32" viewBox="0 0 32 32"><path d="M14 28V14H24" fill="none" stroke="#767a7b" stroke-width="4.4"/><path d="M20 5L31 14L20 23Z" fill="#767a7b"/><path d="M1 29H8M19 29H28" stroke="#767a7b" stroke-width="3.4"/></svg>
<div class="a" style="left:2384px;top:141px;width:2px;height:42px;background:#44484a;"></div>
<svg style="left:2396px;top:147px" width="32" height="30" viewBox="0 0 32 30"><rect x="6" y="1" width="5" height="5" fill="#767a7b"/><path d="M3 11H11V25M2 27H15" fill="none" stroke="#767a7b" stroke-width="3.6"/><path d="M13 15H22" stroke="#767a7b" stroke-width="4"/><path d="M20 7L31 15L20 23Z" fill="#767a7b"/></svg>
<svg style="left:2441px;top:146px" width="32" height="32" viewBox="0 0 32 32"><path d="M1 3H25M1 9H25M1 15H25M1 21H13" stroke="#767a7b" stroke-width="3.6"/><path d="M16 19L23 19L23 14L32 22L23 30L23 25L16 25Z" fill="#808485"/></svg>
<svg style="left:2484px;top:146px" width="34" height="34" viewBox="0 0 34 34"><g fill="none" stroke="#d99a2b" stroke-width="5.4" stroke-linejoin="round"><path d="M2 7H22M19 2L26 7L19 12"/><path d="M13 7V23M7.5 20L13 26.5L18.5 20"/></g><g fill="none" stroke="#fdeebd" stroke-width="2" stroke-linejoin="round"><path d="M3 7H23M19.5 3.5L24.5 7L19.5 10.5"/><path d="M13 8V24M9 20.5L13 25L17 20.5"/></g><path d="M0 31H8M24 31H32" stroke="#3f63c8" stroke-width="3"/></svg>
<div class="a" style="left:2524px;top:148.5px;width:4px;height:4.0px;background:#c9cbc4;"></div>
<div class="a" style="left:2524px;top:156.1px;width:4px;height:4.0px;background:#c9cbc4;"></div>
<div class="a" style="left:2524px;top:163.7px;width:4px;height:4.0px;background:#c9cbc4;"></div>
<div class="a" style="left:2524px;top:171.3px;width:4px;height:4.0px;background:#c9cbc4;"></div>
<svg style="left:2539px;top:146px" width="32" height="32" viewBox="0 0 32 32"><g stroke="#4f9a94" stroke-width="2" stroke-linecap="round"><path d="M16 2V8M6 5L10 10M26 5L22 10M1 15H7M31 17H24M4 26L9 21M27 27L22 22M15 28V31"/></g><ellipse cx="16" cy="17" rx="7.5" ry="9.5" transform="rotate(-35 16 17)" fill="#5f9c63" stroke="#2f6f6a" stroke-width="2"/><ellipse cx="14" cy="15" rx="3" ry="5.5" transform="rotate(-35 14 15)" fill="#d9ecc9"/></svg>
<svg style="left:2575.5px;top:160.5px" width="11" height="8" viewBox="0 0 11 8"><path d="M0 0H11L5.5 7.5Z" fill="#0a0a0a"/></svg>
<svg style="left:2599.5px;top:147.5px" width="29.0" height="29.0" viewBox="0 0 29.0 29.0"><defs><radialGradient id="pg2614" cx="50%" cy="30%" r="75%"><stop offset="0" stop-color="#8fd47c"/><stop offset="0.55" stop-color="#3f9e3c"/><stop offset="1" stop-color="#2b7a2b"/></radialGradient></defs><circle cx="14.5" cy="14.5" r="13.5" fill="url(#pg2614)" stroke="#2c6e2c" stroke-width="1.2"/><path d="M9.9 3.6L21.7 14.5L9.9 25.4Z" fill="#fff"/></svg>
<svg style="left:2635.5px;top:160.5px" width="11" height="8" viewBox="0 0 11 8"><path d="M0 0H11L5.5 7.5Z" fill="#0a0a0a"/></svg>
<svg style="left:2657.5px;top:145.5px" width="22" height="22" viewBox="0 0 22 22"><defs><radialGradient id="pg2668" cx="50%" cy="30%" r="75%"><stop offset="0" stop-color="#8fd47c"/><stop offset="0.55" stop-color="#3f9e3c"/><stop offset="1" stop-color="#2b7a2b"/></radialGradient></defs><circle cx="11" cy="11" r="10" fill="url(#pg2668)" stroke="#2c6e2c" stroke-width="1.2"/><path d="M6.4 2.7L18.2 11L6.4 19.3Z" fill="#fff"/></svg>
<svg style="left:2671.5px;top:160.5px" width="20" height="16" viewBox="0 0 22 18"><rect x="1" y="5" width="20" height="12" rx="1.5" fill="#d83a34" stroke="#9f2420" stroke-width="1.4"/><path d="M7 5V2H15V5" fill="none" stroke="#d83a34" stroke-width="2.4"/><path d="M1 10H21" stroke="#f5b0a8" stroke-width="1.6"/><rect x="9" y="8.5" width="4" height="4" fill="#fbe3df"/></svg>
<svg style="left:2695.5px;top:160.5px" width="11" height="8" viewBox="0 0 11 8"><path d="M0 0H11L5.5 7.5Z" fill="#0a0a0a"/></svg>
<div class="a" style="left:2714px;top:148.5px;width:4px;height:4.0px;background:#c9cbc4;"></div>
<div class="a" style="left:2714px;top:156.1px;width:4px;height:4.0px;background:#c9cbc4;"></div>
<div class="a" style="left:2714px;top:163.7px;width:4px;height:4.0px;background:#c9cbc4;"></div>
<div class="a" style="left:2714px;top:171.3px;width:4px;height:4.0px;background:#c9cbc4;"></div>
<svg style="left:2727px;top:146px" width="36" height="34" viewBox="0 0 36 34"><path d="M2 32L4 23L24 5L31 11L11 30Z" fill="#f6e3a1" stroke="#b98a34" stroke-width="1.4" stroke-linejoin="round"/><path d="M12 16L20 23L11 30L4 23Z" fill="#8c8a86"/><path d="M2 32L4 23L10 29Z" fill="#fffdf2"/><path d="M24 5C27 1 33 5 31 11Z" fill="#f0c65a" stroke="#b98a34" stroke-width="1.2"/><path d="M23 9L27 12" stroke="#2f5fa8" stroke-width="2.4"/></svg>
<svg style="left:2765.5px;top:160.5px" width="11" height="8" viewBox="0 0 11 8"><path d="M0 0H11L5.5 7.5Z" fill="#0a0a0a"/></svg>
<div class="a" style="left:114px;top:205.8px;width:4px;height:4.0px;background:#c9cbc4;"></div>
<div class="a" style="left:114px;top:213.8px;width:4px;height:4.0px;background:#c9cbc4;"></div>
<div class="a" style="left:114px;top:221.8px;width:4px;height:4.0px;background:#c9cbc4;"></div>
<div class="a" style="left:114px;top:229.8px;width:4px;height:4.0px;background:#c9cbc4;"></div>
<svg style="left:130px;top:204px" width="30" height="34" viewBox="0 0 30 34"><rect x="9" y="12" width="19" height="21" fill="#6a6d6f" stroke="#808485" stroke-width="1.6"/><path d="M13 18H24M13 22H24M13 26H24" stroke="#808485" stroke-width="1.6"/><path d="M5 1H13V13H18L9 24L0 13H5Z" fill="#808485"/><rect x="1" y="27" width="8" height="6" fill="#777a7c"/></svg>
<svg style="left:165.5px;top:219.5px" width="11" height="8" viewBox="0 0 11 8"><path d="M0 0H11L5.5 7.5Z" fill="#85888a"/></svg>
<svg style="left:190px;top:204px" width="30" height="34" viewBox="0 0 30 34"><rect x="9" y="1" width="19" height="21" fill="#6a6d6f" stroke="#808485" stroke-width="1.6"/><path d="M13 6H24M13 10H24M13 14H24" stroke="#808485" stroke-width="1.6"/><path d="M5 33H13V21H18L9 10L0 21H5Z" fill="#808485"/><rect x="18" y="24" width="8" height="6" fill="#777a7c"/></svg>
<svg style="left:225.5px;top:219.5px" width="11" height="8" viewBox="0 0 11 8"><path d="M0 0H11L5.5 7.5Z" fill="#85888a"/></svg>
<svg style="left:248px;top:207px" width="34" height="28" viewBox="0 0 34 28"><path d="M34 9H17V3L6 14L17 25V19H34Z" fill="#808485"/><path d="M9 1L10.5 6L15 4L12 8L17 9.5L12 11L13 16L9 12.5L5 16L6 11L1 9.5L6 8L3 4L7.5 6Z" fill="#8f9294"/></svg>
<svg style="left:292px;top:207px" width="34" height="28" viewBox="0 0 34 28"><path d="M0 9H17V3L28 14L17 25V19H0Z" fill="#808485"/><path d="M25 1L26.5 6L31 4L28 8L33 9.5L28 11L29 16L25 12.5L21 16L22 11L17 9.5L22 8L19 4L23.5 6Z" fill="#8f9294"/></svg>
<svg style="left:336px;top:207px" width="32" height="28" viewBox="0 0 32 28"><path d="M31 9H16V2L2 14L16 26V19H31Z" fill="#f9dc7c" stroke="#c98a1e" stroke-width="2" stroke-linejoin="round"/><path d="M6 14L15 6V11H29" fill="none" stroke="#fff3c4" stroke-width="1.8"/></svg>
<svg style="left:373.5px;top:219.5px" width="11" height="8" viewBox="0 0 11 8"><path d="M0 0H11L5.5 7.5Z" fill="#0a0a0a"/></svg>
<svg style="left:397px;top:207px" width="32" height="28" viewBox="0 0 32 28"><path d="M1 9H16V2L30 14L16 26V19H1Z" fill="#808485"/></svg>
<svg style="left:433.5px;top:219.5px" width="11" height="8" viewBox="0 0 11 8"><path d="M0 0H11L5.5 7.5Z" fill="#85888a"/></svg>
<svg style="left:467px;top:203px" width="32" height="34" viewBox="0 0 32 34"><rect x="2" y="10" width="26" height="23" fill="#f6f7fc" stroke="#d8c08a" stroke-width="1.6"/><rect x="2" y="10" width="26" height="5" fill="#5b8fe0"/><path d="M22 1L30 7L25 11L22 17L16 11L20 8Z" fill="#3ea14a" stroke="#2a7a34" stroke-width="1.2"/><path d="M14 21L19 15" stroke="#444" stroke-width="2.2"/></svg>
<svg style="left:2915px;top:205px" width="32" height="32" viewBox="0 0 32 32"><circle cx="12" cy="12" r="9" fill="none" stroke="#7b7f80" stroke-width="3.6"/><path d="M19 19L28.5 28.5" stroke="#7b7f80" stroke-width="4.2"/></svg>
<div class="a" style="left:2975.7px;top:205.8px;width:4.0px;height:4.0px;background:#c9cbc4;"></div>
<div class="a" style="left:2975.7px;top:213.8px;width:4.0px;height:4.0px;background:#c9cbc4;"></div>
<div class="a" style="left:2975.7px;top:221.8px;width:4.0px;height:4.0px;background:#c9cbc4;"></div>
<div class="a" style="left:2975.7px;top:229.8px;width:4.0px;height:4.0px;background:#c9cbc4;"></div>
<svg style="left:2992px;top:203px" width="30" height="34" viewBox="0 0 30 34"><rect x="1.5" y="9.5" width="22" height="22" fill="#f4f6fb" stroke="#c9b27a" stroke-width="1.6"/><rect x="1.5" y="9.5" width="22" height="6" fill="#4f86d8"/><path d="M9 15V31M2 23H23" stroke="#525757" stroke-width="2.4"/><path d="M21 0L23.5 5L29 7.5L23.5 10L21 15L18.5 10L13 7.5L18.5 5Z" fill="#f9e08a" stroke="#c9952a" stroke-width="1.4"/></svg>
<svg style="left:3047px;top:203px" width="32" height="32" viewBox="0 0 32 32"><rect x="1.5" y="1.5" width="20" height="18" fill="#f4f6fb" stroke="#c9b27a" stroke-width="1.6"/><rect x="1.5" y="1.5" width="20" height="5" fill="#4f86d8"/><path d="M8 6V19M2 12H21" stroke="#525757" stroke-width="2"/><rect x="12" y="12" width="18" height="19" rx="2" fill="#e9eefb" stroke="#8ea3d8" stroke-width="1.6"/><text x="21" y="28.5" font-family="Liberation Sans, sans-serif" font-weight="bold" font-size="19" fill="#3a63b8" text-anchor="middle">C</text></svg>
<div class="a" style="left:3084px;top:198px;width:44px;height:44px;border:2px solid #6a6e70;background:#50555566"></div>
<svg style="left:3090px;top:204px" width="32" height="32" viewBox="0 0 32 32"><g stroke="#4f9a94" stroke-width="2" stroke-linecap="round"><path d="M16 2V8M6 5L10 10M26 5L22 10M1 15H7M31 17H24M4 26L9 21M27 27L22 22M15 28V31"/></g><ellipse cx="16" cy="17" rx="7.5" ry="9.5" transform="rotate(-35 16 17)" fill="#5f9c63" stroke="#2f6f6a" stroke-width="2"/><ellipse cx="14" cy="15" rx="3" ry="5.5" transform="rotate(-35 14 15)" fill="#d9ecc9"/></svg>
<div class="a" style="left:112px;top:1910px;width:3024px;height:55px;background:#525757;"></div>
<div class="a" style="left:2512px;top:1925.0px;width:4px;height:3.599999999999909px;background:#c9cbc4;"></div>
<div class="a" style="left:2512px;top:1931.6px;width:4px;height:3.6000000000001364px;background:#c9cbc4;"></div>
<div class="a" style="left:2512px;top:1938.2px;width:4px;height:3.599999999999909px;background:#c9cbc4;"></div>
<div class="a" style="left:2512px;top:1944.8px;width:4px;height:3.6000000000001364px;background:#c9cbc4;"></div>
<div class="a" style="left:2512px;top:1951.4px;width:4px;height:3.599999999999909px;background:#c9cbc4;"></div>
<div class="a" style="left:3084px;top:1925.0px;width:4px;height:3.599999999999909px;background:#c9cbc4;"></div>
<div class="a" style="left:3084px;top:1931.6px;width:4px;height:3.6000000000001364px;background:#c9cbc4;"></div>
<div class="a" style="left:3084px;top:1938.2px;width:4px;height:3.599999999999909px;background:#c9cbc4;"></div>
<div class="a" style="left:3084px;top:1944.8px;width:4px;height:3.6000000000001364px;background:#c9cbc4;"></div>
<div class="a" style="left:3084px;top:1951.4px;width:4px;height:3.599999999999909px;background:#c9cbc4;"></div>
<svg style="left:3100px;top:1924px" width="28" height="28" viewBox="0 0 28 28"><circle cx="14" cy="14" r="13.5" fill="#3b8df0"/><text x="14" y="21.5" font-family="Liberation Sans, sans-serif" font-weight="bold" font-size="20" fill="#dfeeff" text-anchor="middle">?</text></svg>
</div></div>
</body></html>
